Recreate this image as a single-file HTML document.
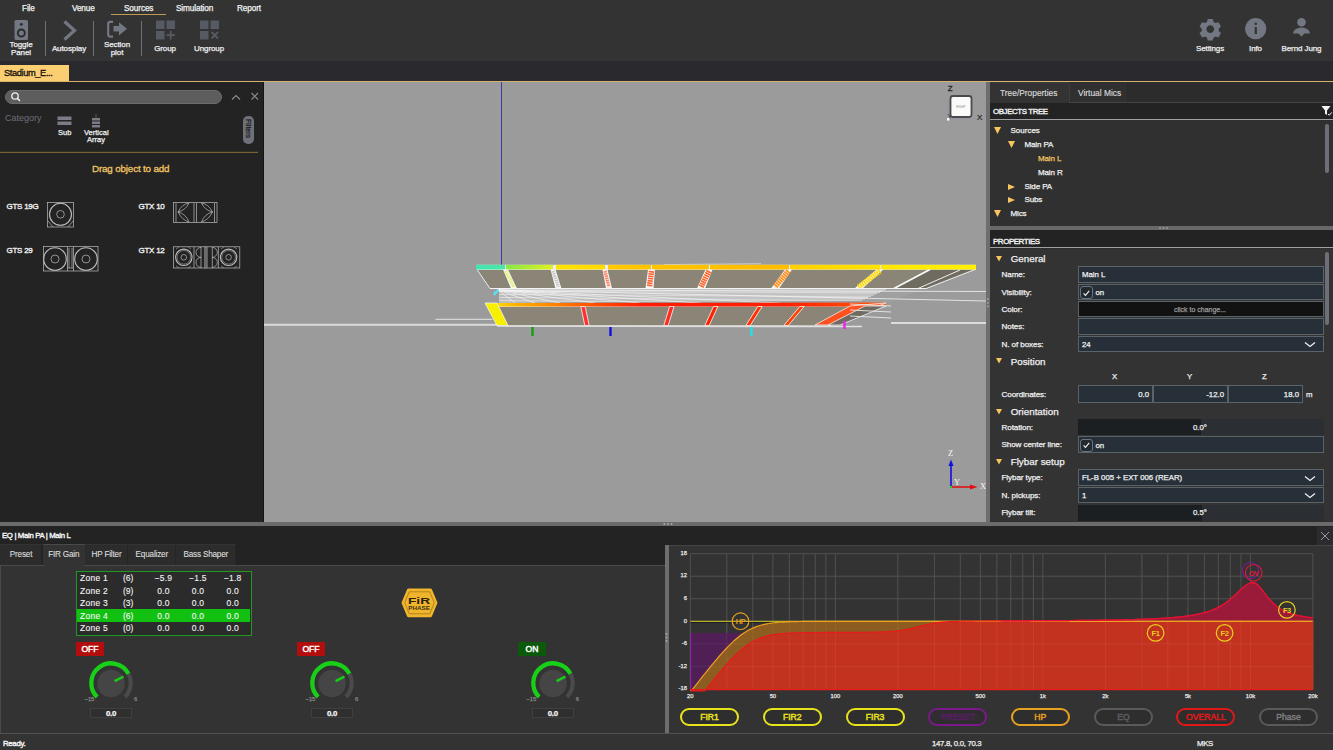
<!DOCTYPE html>
<html><head><meta charset="utf-8">
<style>
*{margin:0;padding:0;box-sizing:border-box}
html,body{width:1333px;height:750px;overflow:hidden;background:#2a2a2e;font-family:"Liberation Sans",sans-serif;color:#fff}
.a{position:absolute}
.t{position:absolute;white-space:nowrap;line-height:1;-webkit-text-stroke-width:0.25px}
#top{left:0;top:0;width:1333px;height:61px;background:#333333}
.menu{font-size:8.2px;color:#f2f2f2;top:4.8px;letter-spacing:-0.1px}
.tb{font-size:8px;color:#f0f0f0;text-align:center;width:60px;letter-spacing:-0.1px}
.sep{position:absolute;width:1px;background:#6d7378;top:21px;height:35px}
#tabbar{left:0;top:61px;width:1333px;height:20px;background:#2a2a2e}
#left{left:0;top:82px;width:263px;height:440px;background:#232323}
#vp{left:264px;top:82px;width:722px;height:440px;background:#9b9b9b}
#right{left:990px;top:82px;width:343px;height:440px;background:#2e2e2e}
#hsplit{left:0;top:522px;width:1333px;height:4px;background:#6b6b6b}
#bottom{left:0;top:526px;width:1333px;height:209px;background:#232323}
#status{left:0;top:733px;width:1333px;height:17px;background:#333333;border-top:1.5px solid #525252;z-index:2}
</style></head><body>
<!-- TOP TOOLBAR -->
<div id="top" class="a">
  <div class="t menu" style="left:22px">File</div>
  <div class="t menu" style="left:72px">Venue</div>
  <div class="t menu" style="left:124px">Sources</div>
  <div class="t menu" style="left:176px">Simulation</div>
  <div class="t menu" style="left:237px">Report</div>
  <div class="a" style="left:111px;top:13.5px;width:55px;height:1.2px;background:#c09a50"></div>
  <svg class="a" style="left:0;top:0" width="300" height="61" viewBox="0 0 300 61">
    <g fill="#737782">
      <rect x="14.5" y="20" width="13.5" height="20" rx="1.5"/>
    </g>
    <circle cx="21.3" cy="24.3" r="1.4" fill="#2b2b2b"/>
    <circle cx="21.3" cy="33" r="3.5" fill="none" stroke="#2b2b2b" stroke-width="1.9"/>
    <polyline points="64.5,21.5 74.5,30.5 64.5,39.5" fill="none" stroke="#737782" stroke-width="3.2"/>
    <path d="M113,21.8 h-2.8 a2,2 0 0 0 -2,2 v10.8 a2,2 0 0 0 2,2 h2.8" fill="none" stroke="#737782" stroke-width="2.2"/>
    <path d="M113.5,26 h5.5 v-3.8 l8,6.6 l-8,6.6 v-3.8 h-5.5 z" fill="#737782"/>
    <g fill="#565a62">
      <rect x="156" y="20.5" width="8.5" height="8.5"/>
      <rect x="166.5" y="20.5" width="8.5" height="8.5"/>
      <rect x="156" y="31" width="8.5" height="8.5"/>
      <rect x="200" y="20.5" width="8.5" height="8.5"/>
      <rect x="210.5" y="20.5" width="8.5" height="8.5"/>
      <rect x="200" y="31" width="8.5" height="8.5"/>
    </g>
    <path d="M170.7,31 v8.5 M166.5,35.2 h8.5" stroke="#565a62" stroke-width="1.8"/>
    <path d="M211.5,32 l6.5,6.5 M218,32 l-6.5,6.5" stroke="#565a62" stroke-width="1.8"/>
  </svg>
  <div class="t tb" style="left:-9px;top:40.7px;line-height:8px">Toggle<br>Panel</div>
  <div class="t tb" style="left:39px;top:44.6px">Autosplay</div>
  <div class="t tb" style="left:87px;top:40.7px;line-height:8px">Section<br>plot</div>
  <div class="t tb" style="left:135px;top:44.6px">Group</div>
  <div class="t tb" style="left:179px;top:44.6px">Ungroup</div>
  <svg class="a" style="left:1190px;top:10px" width="143" height="40" viewBox="1190 10 143 40">
    <g fill="#737782">
      <g transform="translate(1210.25 29.1) scale(0.92) translate(-1210.25 -29)"><path d="M1207.5,18 h5.5 l0.8,3.2 l2.2,1.3 l3.2,-1 l2.7,4.8 l-2.4,2.2 v2.5 l2.4,2.2 l-2.7,4.8 l-3.2,-1 l-2.2,1.3 l-0.8,3.2 h-5.5 l-0.8,-3.2 l-2.2,-1.3 l-3.2,1 l-2.7,-4.8 l2.4,-2.2 v-2.5 l-2.4,-2.2 l2.7,-4.8 l3.2,1 l2.2,-1.3 z M1210.25,24.8 a4.2,4.2 0 1 0 0.01,0 z" fill-rule="evenodd"/></g>
      <circle cx="1255.7" cy="28.7" r="10.6"/>
      <circle cx="1301.5" cy="22.3" r="4.3"/>
      <path d="M1293,33.5 a8.5,6 0 0 1 17,0 z M1298.5,33.5 h6 l-3,3 z"/>
    </g>
    <rect x="1254.7" y="27" width="2.2" height="7" fill="#333"/>
    <circle cx="1255.8" cy="23.8" r="1.2" fill="#333"/>
  </svg>
  <div class="t tb" style="left:1180px;top:44.6px">Settings</div>
  <div class="t tb" style="left:1225.5px;top:44.6px">Info</div>
  <div class="t tb" style="left:1271.5px;top:44.6px">Bernd Jung</div>
  <div class="sep" style="left:45px"></div>
  <div class="sep" style="left:93px"></div>
  <div class="sep" style="left:141px"></div>
</div>
<div id="tabbar" class="a"></div>
<div class="a" style="left:0;top:65px;width:69px;height:17px;background:#fcce72"></div>
<div class="t" style="left:4px;top:68.5px;font-size:9.3px;color:#111;letter-spacing:-0.4px;-webkit-text-stroke-width:0.3px">Stadium_E...</div>
<div class="a" style="left:0;top:81px;width:1333px;height:1px;background:#d6b26a"></div>
<div id="left" class="a"></div>
<div class="a" style="left:5px;top:90px;width:217px;height:14px;border-radius:7px;background:#5d5d5d;border:1px solid #6c6c6c"></div>
<svg class="a" style="left:0;top:82px" width="263" height="200" viewBox="0 82 263 200">
  <circle cx="15" cy="96" r="3.2" fill="none" stroke="#f0f0f0" stroke-width="1.3"/>
  <path d="M17.3,98.3 l2.6,2.6" stroke="#f0f0f0" stroke-width="1.5"/>
  <polyline points="232,99.5 236,95.5 240,99.5" fill="none" stroke="#8a8a90" stroke-width="1.2"/>
  <path d="M251.5,93 l6.5,6.5 M258,93 l-6.5,6.5" stroke="#8a8a90" stroke-width="1.2"/>
  <g fill="#7a7c86">
    <rect x="57.5" y="116.5" width="14" height="3.5"/>
    <rect x="57.5" y="121.5" width="14" height="3.5"/>
    <rect x="92" y="118" width="8" height="2.5"/>
    <rect x="92" y="121.5" width="8" height="2.5"/>
    <rect x="92" y="125" width="8" height="2.5"/>
  </g>
  <path d="M96,114 v4" stroke="#7a7c86" stroke-width="0.6"/>
  <rect x="243" y="116" width="11" height="28" rx="5" fill="#6e717a"/>
  <rect x="0" y="151.8" width="258" height="1.2" fill="#7a6232"/>
</svg>
<div class="t" style="left:5px;top:114px;font-size:9px;color:#6e7078;-webkit-text-stroke-width:0">Category</div>
<div class="t" style="left:58px;top:129px;font-size:7.5px;color:#f0f0f0">Sub</div>
<div class="t" style="left:84px;top:129px;font-size:7.5px;color:#f0f0f0;text-align:center;width:24px;line-height:7px">Vertical<br>Array</div>
<div class="t" style="left:246px;top:119px;font-size:7px;color:#1e1e1e;transform:rotate(90deg);transform-origin:0 0;left:252px">Filters</div>
<div class="t" style="left:92px;top:164.3px;font-size:9.8px;color:#f1c563;letter-spacing:-0.15px;-webkit-text-stroke-width:0.3px">Drag object to add</div>
<div class="t" style="left:6.5px;top:203px;font-size:8px;color:#f4f4f4;letter-spacing:-0.25px;-webkit-text-stroke-width:0.32px">GTS 19G</div>
<div class="t" style="left:6.5px;top:247px;font-size:8px;color:#f4f4f4;letter-spacing:-0.25px;-webkit-text-stroke-width:0.32px">GTS 29</div>
<div class="t" style="left:138.5px;top:203px;font-size:8px;color:#f4f4f4;letter-spacing:-0.25px;-webkit-text-stroke-width:0.32px">GTX 10</div>
<div class="t" style="left:138.5px;top:247px;font-size:8px;color:#f4f4f4;letter-spacing:-0.25px;-webkit-text-stroke-width:0.32px">GTX 12</div>
<svg class="a" style="left:0;top:190px" width="263" height="90" viewBox="0 190 263 90" fill="none" stroke="#bdbdbd" stroke-width="0.7">
  <rect x="47.5" y="202.5" width="26" height="24.5"/>
  <circle cx="60.5" cy="214.3" r="11" stroke-width="1.1"/>
  <circle cx="60.5" cy="214.3" r="3.8"/>
  <path d="M48,221 l5,6 M73,221 l-5,6"/>
  <rect x="43.5" y="246.5" width="54.5" height="24.5"/>
  <circle cx="55" cy="259" r="11.3" stroke-width="1.1"/>
  <circle cx="55" cy="259" r="4"/>
  <circle cx="86" cy="259" r="11.3" stroke-width="1.1"/>
  <circle cx="86" cy="259" r="4"/>
  <path d="M67.5,247 v24 M73.5,247 v24 M69,248 v20 M72,248 v20 M67.5,268 h6"/>
  <rect x="173.5" y="202.5" width="43.5" height="20"/>
  <path d="M176,203 v19 M214.5,203 v19 M194,203 v19 M196.5,203 v19"/>
  <path d="M178,212 q4,-8 11,-9 M178,212 q4,8 11,10 M178,212 q8,-2 11,-9 M178,212 q8,2 11,10"/>
  <path d="M212.5,212 q-4,-8 -11,-9 M212.5,212 q-4,8 -11,10 M212.5,212 q-8,-2 -11,-9 M212.5,212 q-8,2 -11,10"/>
  <rect x="173.5" y="246.8" width="66.3" height="21.2"/>
  <path d="M194,247 v21 M218.4,247 v21 M201,247 v21 M212.3,247 v21"/>
  <rect x="204.6" y="247" width="2.6" height="21" fill="#6a6a6a" stroke="#9a9a9a" stroke-width="0.5"/>
  <circle cx="183.8" cy="257.3" r="8.2" stroke-width="1.1"/>
  <circle cx="183.8" cy="257.3" r="6.8" stroke-width="0.5"/>
  <circle cx="183.8" cy="257.3" r="2.8"/>
  <circle cx="228.6" cy="257.3" r="8.2" stroke-width="1.1"/>
  <circle cx="228.6" cy="257.3" r="6.8" stroke-width="0.5"/>
  <circle cx="228.6" cy="257.3" r="2.8"/>
  <path d="M201,247.4 a5,5 0 0 0 0,10 a5,5 0 0 0 0,10 M212.3,247.4 a5,5 0 0 1 0,10 a5,5 0 0 1 0,10"/>
  <path d="M176,249 l3,-2 M176,266 l3,2 M191,249 l-3,-2 M191,266 l-3,2 M221,249 l3,-2 M221,266 l3,2 M237,249 l-3,-2 M237,266 l-3,2" stroke-width="0.5"/>
</svg>
<div class="a" style="left:263px;top:82px;width:1px;height:440px;background:#151515"></div>
<div id="vp" class="a"></div>
<!--VP--><svg class="a" style="left:264px;top:82px" width="722" height="440" viewBox="264 82 722 440">
<defs>
<linearGradient id="ug" x1="477" x2="976" y1="0" y2="0" gradientUnits="userSpaceOnUse"><stop offset="0" stop-color="#3ee8b0"/><stop offset="0.06" stop-color="#7ee860"/><stop offset="0.16" stop-color="#e8f020"/><stop offset="0.26" stop-color="#ffe400"/><stop offset="0.42" stop-color="#ffc800"/><stop offset="0.62" stop-color="#ffc400"/><stop offset="0.78" stop-color="#ffe800"/><stop offset="1" stop-color="#fff200"/></linearGradient>
<linearGradient id="lg" x1="485" x2="886" y1="0" y2="0" gradientUnits="userSpaceOnUse"><stop offset="0" stop-color="#ffee00"/><stop offset="0.08" stop-color="#ffb000"/><stop offset="0.25" stop-color="#ff5a00"/><stop offset="0.4" stop-color="#ff1a00"/><stop offset="0.75" stop-color="#ff2000"/><stop offset="1" stop-color="#ff5a10"/></linearGradient>
</defs>
<line x1="501.5" y1="82" x2="501.5" y2="325" stroke="#3a3aa8" stroke-width="1"/>
<rect x="264" y="323.8" width="233" height="2" fill="#d9d9d9"/>
<rect x="435.5" y="318.8" width="57" height="1" fill="#e6e6e6"/>
<line x1="664" y1="264.6" x2="761" y2="263.6" stroke="#d0d0d0" stroke-width="0.8"/>
<polygon points="477,269.5 976,269 926,288.5 490,288.5" fill="#8a8576" stroke="#f2f2f2" stroke-width="0.9"/>
<polygon points="930,269 976,269 926,288.5 894,288.5" fill="#6f6b60" stroke="#f2f2f2" stroke-width="0.8"/>
<rect x="477" y="264.8" width="499" height="4.7" fill="#eeeeee"/>
<linearGradient id="sg0" x1="476" x2="505" y1="0" y2="0" gradientUnits="userSpaceOnUse"><stop offset="0" stop-color="#44e4b0"/><stop offset="1" stop-color="#48e8a8"/></linearGradient>
<rect x="476" y="264.8" width="29" height="4.7" fill="url(#sg0)"/>
<linearGradient id="sg1" x1="506" x2="553" y1="0" y2="0" gradientUnits="userSpaceOnUse"><stop offset="0" stop-color="#88e848"/><stop offset="1" stop-color="#e0f020"/></linearGradient>
<rect x="506" y="264.8" width="47" height="4.7" fill="url(#sg1)"/>
<linearGradient id="sg2" x1="556" x2="605" y1="0" y2="0" gradientUnits="userSpaceOnUse"><stop offset="0" stop-color="#fce400"/><stop offset="1" stop-color="#ffd800"/></linearGradient>
<rect x="556" y="264.8" width="49" height="4.7" fill="url(#sg2)"/>
<linearGradient id="sg3" x1="608" x2="651" y1="0" y2="0" gradientUnits="userSpaceOnUse"><stop offset="0" stop-color="#ffc800"/><stop offset="1" stop-color="#ffc400"/></linearGradient>
<rect x="608" y="264.8" width="43" height="4.7" fill="url(#sg3)"/>
<linearGradient id="sg4" x1="652" x2="709" y1="0" y2="0" gradientUnits="userSpaceOnUse"><stop offset="0" stop-color="#ffc400"/><stop offset="1" stop-color="#ffc000"/></linearGradient>
<rect x="652" y="264.8" width="57" height="4.7" fill="url(#sg4)"/>
<linearGradient id="sg5" x1="710" x2="789" y1="0" y2="0" gradientUnits="userSpaceOnUse"><stop offset="0" stop-color="#ffc000"/><stop offset="1" stop-color="#ffbe00"/></linearGradient>
<rect x="710" y="264.8" width="79" height="4.7" fill="url(#sg5)"/>
<linearGradient id="sg6" x1="790" x2="880" y1="0" y2="0" gradientUnits="userSpaceOnUse"><stop offset="0" stop-color="#ffd000"/><stop offset="1" stop-color="#ffe400"/></linearGradient>
<rect x="790" y="264.8" width="90" height="4.7" fill="url(#sg6)"/>
<linearGradient id="sg7" x1="881" x2="976" y1="0" y2="0" gradientUnits="userSpaceOnUse"><stop offset="0" stop-color="#ffe800"/><stop offset="1" stop-color="#fff000"/></linearGradient>
<rect x="881" y="264.8" width="95" height="4.7" fill="url(#sg7)"/>
<polygon points="503.0,269.5 508.0,269.5 517,288.5 511,288.5" fill="#f8f8f8"/>
<line x1="505.5" y1="271" x2="514" y2="287" stroke="#e0f070" stroke-width="3.4" stroke-dasharray="1.6 0.7"/>
<polygon points="550.5,269.5 555.5,269.5 561.5,288.5 555.5,288.5" fill="#f8f8f8"/>
<line x1="553" y1="271" x2="558.5" y2="287" stroke="#c8c8c8" stroke-width="3.4" stroke-dasharray="1.6 0.7"/>
<polygon points="602.5,269.5 607.5,269.5 612,288.5 606,288.5" fill="#f8f8f8"/>
<line x1="605" y1="271" x2="609" y2="287" stroke="#ff8060" stroke-width="3.4" stroke-dasharray="1.6 0.7"/>
<polygon points="648.0,269.5 655.0,269.5 653.5,288.5 645.5,288.5" fill="#f8f8f8"/>
<line x1="651.5" y1="271" x2="649.5" y2="287" stroke="#ff6030" stroke-width="5.4" stroke-dasharray="1.6 0.7"/>
<polygon points="705.5,269.5 712.5,269.5 705,288.5 697,288.5" fill="#f8f8f8"/>
<line x1="709" y1="271" x2="701" y2="287" stroke="#ff6020" stroke-width="5.4" stroke-dasharray="1.6 0.7"/>
<polygon points="785.0,269.5 792.0,269.5 779,288.5 771,288.5" fill="#f8f8f8"/>
<line x1="788.5" y1="271" x2="775" y2="287" stroke="#ff8a10" stroke-width="5.4" stroke-dasharray="1.6 0.7"/>
<polygon points="876.5,269.5 883.5,269.5 862.5,288.5 854.5,288.5" fill="#f8f8f8"/>
<line x1="880" y1="271" x2="858.5" y2="287" stroke="#ffd800" stroke-width="5.4" stroke-dasharray="1.6 0.7"/>
<line x1="930" y1="269.5" x2="894" y2="288.5" stroke="#f8f8f8" stroke-width="1.5"/>
<line x1="960" y1="270" x2="918" y2="288.5" stroke="#f0f0f0" stroke-width="1"/>
<polygon points="498,288.5 926,288.5 886,303 500,303" fill="#a0a0a0"/>
<line x1="499" y1="290.00" x2="886" y2="289.80" stroke="#f4f4f4" stroke-width="0.7"/>
<line x1="499" y1="291.50" x2="883" y2="291.10" stroke="#f4f4f4" stroke-width="0.7"/>
<line x1="499" y1="293.00" x2="880" y2="292.40" stroke="#f4f4f4" stroke-width="0.7"/>
<line x1="499" y1="294.50" x2="877" y2="293.70" stroke="#f4f4f4" stroke-width="0.7"/>
<line x1="499" y1="296.00" x2="874" y2="295.00" stroke="#f4f4f4" stroke-width="0.7"/>
<line x1="499" y1="297.50" x2="871" y2="296.30" stroke="#f4f4f4" stroke-width="0.7"/>
<line x1="499" y1="299.00" x2="868" y2="297.60" stroke="#f4f4f4" stroke-width="0.7"/>
<line x1="499" y1="300.50" x2="865" y2="298.90" stroke="#f4f4f4" stroke-width="0.7"/>
<line x1="499" y1="302.00" x2="862" y2="300.20" stroke="#f4f4f4" stroke-width="0.7"/>
<line x1="498" y1="290" x2="515" y2="303" stroke="#f4f4f4" stroke-width="0.7"/>
<line x1="498" y1="290" x2="535" y2="303" stroke="#f4f4f4" stroke-width="0.7"/>
<line x1="498" y1="290" x2="560" y2="303" stroke="#f4f4f4" stroke-width="0.7"/>
<line x1="498" y1="290" x2="595" y2="303" stroke="#f4f4f4" stroke-width="0.7"/>
<line x1="498" y1="290" x2="640" y2="303" stroke="#f4f4f4" stroke-width="0.7"/>
<line x1="498" y1="290" x2="700" y2="303" stroke="#f4f4f4" stroke-width="0.7"/>
<line x1="498" y1="290" x2="780" y2="303" stroke="#f4f4f4" stroke-width="0.7"/>
<line x1="498" y1="290" x2="986" y2="291.5" stroke="#f4f4f4" stroke-width="0.8"/>
<line x1="498" y1="290" x2="986" y2="301" stroke="#f4f4f4" stroke-width="0.8"/>
<line x1="490" y1="288.5" x2="926" y2="288.5" stroke="#f4f4f4" stroke-width="1.2"/>
<polygon points="493,293 498,289 499,291 494.5,296" fill="#58e0f0"/>
<polygon points="497,306.5 886,306 828,326 506,326" fill="#8a8576" stroke="#f0f0f0" stroke-width="0.9"/>
<polygon points="485,303 886,302.5 886,306.5 497,306.5" fill="url(#lg)"/>
<polygon points="485,303 497,303 508,325.5 497,325.5" fill="#f6f000" stroke="#f4f4f4" stroke-width="0.8"/>
<polygon points="580.8,306.5 585.2,306.5 589.2,325.5 584.8,325.5" fill="#ff3030" stroke="#fafafa" stroke-width="0.8"/>
<polygon points="669.5999999999999,306.5 674.0,306.5 668.2,325.5 663.8,325.5" fill="#ff2a20" stroke="#fafafa" stroke-width="0.8"/>
<polygon points="713.5,306.5 717.9000000000001,306.5 709.2,325.5 704.8,325.5" fill="#ff2000" stroke="#fafafa" stroke-width="0.8"/>
<polygon points="757.8,306.5 762.2,306.5 750.2,325.5 745.8,325.5" fill="#ff3000" stroke="#fafafa" stroke-width="0.8"/>
<polygon points="799.8,306.5 804.2,306.5 788.2,325.5 783.8,325.5" fill="#ff4000" stroke="#fafafa" stroke-width="0.8"/>
<polygon points="850,306 886,303 830,325 815,325" fill="#ff5020" stroke="#f0f0f0" stroke-width="0.8"/>
<polygon points="865,306 886,306 840,325 828,325" fill="#6f6b60" stroke="#f0f0f0" stroke-width="0.8"/>
<line x1="497" y1="326" x2="862" y2="326.5" stroke="#e0e0e0" stroke-width="1.6"/>
<rect x="891" y="322" width="95" height="2" fill="#dcdcdc"/>
<line x1="850" y1="304" x2="891" y2="306" stroke="#eaeaea" stroke-width="0.9"/>
<line x1="850" y1="310" x2="891" y2="312" stroke="#eaeaea" stroke-width="0.9"/>
<line x1="850" y1="316" x2="891" y2="318" stroke="#eaeaea" stroke-width="0.9"/>
<rect x="531.3" y="327" width="2.4" height="9" fill="#10a010"/>
<rect x="609.3" y="327" width="2.4" height="9" fill="#1010e0"/>
<rect x="750.3" y="327" width="2.4" height="9" fill="#20e0e8"/>
<rect x="843.3" y="321" width="2.4" height="8" fill="#f020f0"/>
<text x="947.8" y="90.5" font-family="Liberation Sans" font-size="8" fill="#202020" stroke="#202020" stroke-width="0.3">Z</text>
<text x="977" y="119.5" font-family="Liberation Sans" font-size="8" fill="#202020" stroke="#202020" stroke-width="0.2">X</text>
<text x="947.5" y="119" font-family="Liberation Sans" font-size="7" fill="#202020">Y</text>
<rect x="950.5" y="96" width="21" height="21" rx="2.5" fill="#fafafa" stroke="#4a4a4a" stroke-width="1.8"/>
<text x="961" y="108" font-family="Liberation Sans" font-size="3" fill="#888" text-anchor="middle">RIGHT</text>
<rect x="947" y="118" width="2.5" height="2.5" fill="#fff"/>
<line x1="948" y1="99" x2="948" y2="118" stroke="#8090b0" stroke-width="0.4"/>
<line x1="949" y1="119" x2="969" y2="119" stroke="#8090b0" stroke-width="0.4"/>
<line x1="951" y1="487" x2="951" y2="463" stroke="#1010e0" stroke-width="1.6"/>
<polygon points="948.5,466 951,459.5 953.5,466" fill="#1010e0"/>
<line x1="951" y1="487" x2="973" y2="487" stroke="#e01010" stroke-width="1.6"/>
<polygon points="970,484.5 977.5,487 970,489.5" fill="#e01010"/>
<rect x="950" y="486" width="2" height="2" fill="#20d020"/>
<text x="948" y="456" font-family="Liberation Serif" font-size="8.5" fill="#f6f6f6">Z</text>
<text x="954" y="485" font-family="Liberation Serif" font-size="8.5" fill="#f6f6f6">Y</text>
<text x="980" y="489" font-family="Liberation Serif" font-size="8.5" fill="#f6f6f6">X</text>
</svg><!--/VP-->
<div class="a" style="left:986px;top:82px;width:4px;height:440px;background:#6e6e6e"></div>
<svg class="a" style="left:986px;top:296px" width="4" height="12"><circle cx="1.8" cy="3" r="0.9" fill="#a8a8a8"/><circle cx="1.8" cy="6.8" r="0.9" fill="#a8a8a8"/><circle cx="1.8" cy="10.3" r="0.9" fill="#a8a8a8"/></svg>
<div id="right" class="a"></div>
<div class="a" style="left:990px;top:82px;width:353px;height:21px;background:#2c2c2c;"></div>
<div class="a" style="left:990px;top:82px;width:79px;height:21px;background:#333333;border-top:1px solid #3c3c3c"></div>
<div class="a" style="left:1069px;top:83px;width:59px;height:19px;background:#303030;border-left:1px solid #3e3e3e;border-right:1px solid #2a2a2a"></div>
<div class="a" style="left:1069px;top:101.5px;width:264px;height:1px;background:#444"></div>
<div class="t" style="left:1000px;top:89px;font-size:8.4px;color:#dadada;-webkit-text-stroke-width:0.15px">Tree/Properties</div>
<div class="t" style="left:1078px;top:89px;font-size:8.4px;color:#dadada;-webkit-text-stroke-width:0.15px">Virtual Mics</div>
<div class="a" style="left:990px;top:103px;width:343px;height:17px;background:#232323;"></div>
<div class="a" style="left:990px;top:119px;width:343px;height:1.2px;background:#a0a0a0;"></div>
<svg class="a" style="left:1320px;top:104px" width="13" height="13" viewBox="0 0 13 13"><path d="M1.5,2 h9 l-3.5,4.5 v4.5 l-2,-1.2 v-3.3 z" fill="#f4f4f4"/><polyline points="8,10 9.3,11.2 11.8,8.4" fill="none" stroke="#f4f4f4" stroke-width="1"/></svg>
<div class="t" style="left:993px;top:108px;font-size:7.9px;color:#f4f4f4;letter-spacing:-0.4px;-webkit-text-stroke-width:0.35px">OBJECTS TREE</div>
<div class="a" style="left:990px;top:120.5px;width:343px;height:105.5px;background:#303030;"></div>
<div class="a" style="left:1325px;top:124px;width:4px;height:49px;background:#6c6f78;border-radius:2px"></div>
<svg class="a" style="left:994px;top:127px" width="8" height="8"><polygon points="0,0 7,0 3.5,7" fill="#f7c55e"/></svg>
<div class="t" style="left:1010.5px;top:127px;font-size:8px;color:#f0f0f0;">Sources</div>
<svg class="a" style="left:1008px;top:141px" width="8" height="8"><polygon points="0,0 7,0 3.5,7" fill="#f7c55e"/></svg>
<div class="t" style="left:1024.5px;top:141px;font-size:8px;letter-spacing:-0.12px;color:#f0f0f0;">Main PA</div>
<div class="t" style="left:1038px;top:155px;font-size:8px;letter-spacing:-0.12px;color:#f2c560;">Main L</div>
<div class="t" style="left:1038px;top:169px;font-size:8px;letter-spacing:-0.12px;color:#f0f0f0;">Main R</div>
<svg class="a" style="left:1008px;top:184px" width="8" height="8"><polygon points="0,0 7,3 0,6" fill="#f7c55e"/></svg>
<div class="t" style="left:1024.5px;top:183px;font-size:8px;letter-spacing:-0.12px;color:#f0f0f0;">Side PA</div>
<svg class="a" style="left:1008px;top:197px" width="8" height="8"><polygon points="0,0 7,3 0,6" fill="#f7c55e"/></svg>
<div class="t" style="left:1024.5px;top:195.7px;font-size:8px;letter-spacing:-0.12px;color:#f0f0f0;">Subs</div>
<svg class="a" style="left:994px;top:209.5px" width="8" height="8"><polygon points="0,0 7,0 3.5,7" fill="#f7c55e"/></svg>
<div class="t" style="left:1010.5px;top:209.6px;font-size:8px;letter-spacing:-0.12px;color:#f0f0f0;">Mics</div>
<div class="a" style="left:990px;top:226px;width:343px;height:4px;background:#686868;"></div>
<svg class="a" style="left:1158px;top:226px" width="12" height="4"><circle cx="2" cy="2" r="1" fill="#9a9a9a"/><circle cx="5.5" cy="2" r="1" fill="#9a9a9a"/><circle cx="9" cy="2" r="1" fill="#9a9a9a"/></svg>
<div class="a" style="left:990px;top:230px;width:343px;height:17px;background:#232323;"></div>
<div class="a" style="left:990px;top:247px;width:343px;height:1.2px;background:#a0a0a0;"></div>
<div class="t" style="left:993px;top:237.5px;font-size:7.9px;color:#f4f4f4;letter-spacing:-0.4px;-webkit-text-stroke-width:0.35px">PROPERTIES</div>
<div class="a" style="left:990px;top:248.5px;width:343px;height:272.5px;background:#333333;"></div>
<div class="a" style="left:1325px;top:252px;width:4px;height:73px;background:#6c6f78;border-radius:2px"></div>
<svg class="a" style="left:996px;top:255.5px" width="7" height="6"><polygon points="0,0 6,0 3,5.5" fill="#f7c55e"/></svg>
<div class="t" style="left:1010.7px;top:254.0px;font-size:9.8px;color:#f0f0f0;">General</div>
<div class="a" style="left:1078px;top:266px;width:246px;height:16.5px;background:#273038;border:1.3px solid #5a6368"></div>
<div class="t" style="left:1001.5px;top:271px;font-size:8.1px;color:#f0f0f0;letter-spacing:-0.1px">Name:</div>
<div class="t" style="left:1082px;top:271px;font-size:7.8px;color:#f0f0f0;">Main L</div>
<div class="a" style="left:1078px;top:283.5px;width:246px;height:16.5px;background:#273038;border:1.3px solid #5a6368"></div>
<div class="t" style="left:1001.5px;top:288.5px;font-size:8.1px;color:#f0f0f0;letter-spacing:-0.1px">Visibility:</div>
<div class="a" style="left:1080.3px;top:286px;width:12.5px;height:12.5px;border:1px solid #6a7480;border-radius:3px;background:#222a30"></div>
<svg class="a" style="left:1080px;top:286.5px" width="12.5" height="12.5"><polyline points="3.6,6.3 5.5,8.4 9.2,3.9" fill="none" stroke="#f4f4f4" stroke-width="1.1"/></svg>
<div class="t" style="left:1095.5px;top:289px;font-size:7.8px;color:#f0f0f0;">on</div>
<div class="a" style="left:1078px;top:300.5px;width:246px;height:16.5px;background:#121212;border:1.3px solid #5a6368"></div>
<div class="t" style="left:1001.5px;top:305.5px;font-size:8.1px;color:#f0f0f0;letter-spacing:-0.1px">Color:</div>
<div class="t" style="left:1145px;top:305.5px;font-size:7px;color:#9a9a9a;width:110px;text-align:center">click to change...</div>
<div class="a" style="left:1078px;top:318px;width:246px;height:16.5px;background:#273038;border:1.3px solid #5a6368"></div>
<div class="t" style="left:1001.5px;top:323px;font-size:8.1px;color:#f0f0f0;letter-spacing:-0.1px">Notes:</div>
<div class="a" style="left:1078px;top:335.5px;width:246px;height:16.5px;background:#273038;border:1.3px solid #5a6368"></div>
<div class="t" style="left:1001.5px;top:340.5px;font-size:8.1px;color:#f0f0f0;letter-spacing:-0.1px">N. of boxes:</div>
<div class="t" style="left:1082px;top:340.5px;font-size:7.8px;color:#f0f0f0;">24</div>
<svg class="a" style="left:1304px;top:341px" width="12" height="8"><polyline points="1,1.5 6,5.5 11,1.5" fill="none" stroke="#f0f0f0" stroke-width="1.3"/></svg>
<svg class="a" style="left:996px;top:358px" width="7" height="6"><polygon points="0,0 6,0 3,5.5" fill="#f7c55e"/></svg>
<div class="t" style="left:1010.7px;top:356.5px;font-size:9.8px;color:#f0f0f0;">Position</div>
<div class="t" style="left:1112px;top:373px;font-size:7.8px;color:#f0f0f0;">X</div>
<div class="t" style="left:1187px;top:373px;font-size:7.8px;color:#f0f0f0;">Y</div>
<div class="t" style="left:1262px;top:373px;font-size:7.8px;color:#f0f0f0;">Z</div>
<div class="t" style="left:1001.5px;top:390.5px;font-size:8.1px;color:#f0f0f0;letter-spacing:-0.1px">Coordinates:</div>
<div class="a" style="left:1078px;top:385px;width:75px;height:18px;background:#273038;border:1.3px solid #5a6368"></div>
<div class="a" style="left:1153px;top:385px;width:75px;height:18px;background:#273038;border:1.3px solid #5a6368"></div>
<div class="a" style="left:1228px;top:385px;width:75px;height:18px;background:#273038;border:1.3px solid #5a6368"></div>
<div class="t" style="left:1078px;top:391px;font-size:7.8px;color:#f0f0f0;width:71px;text-align:right">0.0</div>
<div class="t" style="left:1153px;top:391px;font-size:7.8px;color:#f0f0f0;width:71px;text-align:right">-12.0</div>
<div class="t" style="left:1228px;top:391px;font-size:7.8px;color:#f0f0f0;width:71px;text-align:right">18.0</div>
<div class="t" style="left:1306px;top:391px;font-size:7.8px;color:#f0f0f0;">m</div>
<svg class="a" style="left:996px;top:408.5px" width="7" height="6"><polygon points="0,0 6,0 3,5.5" fill="#f7c55e"/></svg>
<div class="t" style="left:1010.7px;top:407.0px;font-size:9.8px;color:#f0f0f0;">Orientation</div>
<div class="a" style="left:1078px;top:419px;width:246px;height:16px;background:#2b2f33;"></div>
<div class="a" style="left:1078px;top:419px;width:123px;height:16px;background:#1c1f22;"></div>
<div class="t" style="left:1001.5px;top:424px;font-size:8.1px;color:#f0f0f0;letter-spacing:-0.1px">Rotation:</div>
<div class="t" style="left:1150px;top:424px;font-size:7.8px;color:#f0f0f0;width:100px;text-align:center">0.0°</div>
<div class="a" style="left:1078px;top:436px;width:246px;height:16.5px;background:#273038;border:1.3px solid #5a6368"></div>
<div class="t" style="left:1001.5px;top:441px;font-size:8.1px;color:#f0f0f0;letter-spacing:-0.1px">Show center line:</div>
<div class="a" style="left:1080px;top:439px;width:12.5px;height:12.5px;border:1px solid #6a7480;border-radius:3px;background:#222a30"></div>
<svg class="a" style="left:1080px;top:439px" width="12.5" height="12.5"><polyline points="3.6,6.3 5.5,8.4 9.2,3.9" fill="none" stroke="#f4f4f4" stroke-width="1.1"/></svg>
<div class="t" style="left:1095.5px;top:441.5px;font-size:7.8px;color:#f0f0f0;">on</div>
<svg class="a" style="left:996px;top:458.5px" width="7" height="6"><polygon points="0,0 6,0 3,5.5" fill="#f7c55e"/></svg>
<div class="t" style="left:1010.7px;top:457.0px;font-size:9.8px;color:#f0f0f0;">Flybar setup</div>
<div class="a" style="left:1078px;top:469.3px;width:246px;height:16.5px;background:#273038;border:1.3px solid #5a6368"></div>
<div class="t" style="left:1001.5px;top:474px;font-size:8.1px;color:#f0f0f0;letter-spacing:-0.1px">Flybar type:</div>
<div class="t" style="left:1082px;top:474px;font-size:7.8px;color:#f0f0f0;">FL-B 005 + EXT 006 (REAR)</div>
<svg class="a" style="left:1304px;top:474.5px" width="12" height="8"><polyline points="1,1.5 6,5.5 11,1.5" fill="none" stroke="#f0f0f0" stroke-width="1.3"/></svg>
<div class="a" style="left:1078px;top:486.7px;width:246px;height:16.5px;background:#273038;border:1.3px solid #5a6368"></div>
<div class="t" style="left:1001.5px;top:491.5px;font-size:8.1px;color:#f0f0f0;letter-spacing:-0.1px">N. pickups:</div>
<div class="t" style="left:1082px;top:491.5px;font-size:7.8px;color:#f0f0f0;">1</div>
<svg class="a" style="left:1304px;top:492px" width="12" height="8"><polyline points="1,1.5 6,5.5 11,1.5" fill="none" stroke="#f0f0f0" stroke-width="1.3"/></svg>
<div class="a" style="left:1078px;top:505px;width:246px;height:16px;background:#2b2f33;"></div>
<div class="a" style="left:1078px;top:505px;width:124px;height:16px;background:#1c1f22;"></div>
<div class="t" style="left:1001.5px;top:508.5px;font-size:8.1px;color:#f0f0f0;letter-spacing:-0.1px">Flybar tilt:</div>
<div class="t" style="left:1150px;top:508.5px;font-size:7.8px;color:#f0f0f0;width:100px;text-align:center">0.5°</div>
<div id="hsplit" class="a"></div>
<svg class="a" style="left:660px;top:522px" width="16" height="4"><circle cx="4.3" cy="2" r="1" fill="#a8a8a8"/><circle cx="8" cy="2" r="1" fill="#a8a8a8"/><circle cx="11.5" cy="2" r="1" fill="#a8a8a8"/></svg>
<div id="bottom" class="a"></div>
<div id="status" class="a"></div>
<!--BOT--><div class="t" style="left:2px;top:532px;font-size:7.8px;color:#f4f4f4;letter-spacing:-0.35px;z-index:3;-webkit-text-stroke-width:0.4px">EQ | Main PA | Main L</div>
<div class="a" style="left:1317px;top:527px;width:16px;height:18px;background:#2c2c30;"></div>
<svg class="a" style="left:1320px;top:531px" width="10" height="10"><path d="M1,1 L9,9 M9,1 L1,9" stroke="#9a9aa0" stroke-width="1"/></svg>
<div class="a" style="left:0px;top:544px;width:42px;height:21px;background:#2c2c2c;border-top:1px solid #333;border-right:1px solid #262626"></div>
<div class="t" style="left:0px;top:551px;font-size:8.2px;color:#e0e0e0;width:42px;text-align:center;letter-spacing:-0.2px;-webkit-text-stroke-width:0.05px">Preset</div>
<div class="a" style="left:43px;top:544px;width:41.5px;height:21px;background:#333333;border-top:1px solid #4a4a4a;"></div>
<div class="t" style="left:43px;top:551px;font-size:8.2px;color:#e0e0e0;width:41.5px;text-align:center;letter-spacing:-0.2px;-webkit-text-stroke-width:0.05px">FIR Gain</div>
<div class="a" style="left:85px;top:544px;width:43px;height:21px;background:#2c2c2c;border-top:1px solid #333;border-right:1px solid #262626"></div>
<div class="t" style="left:85px;top:551px;font-size:8.2px;color:#e0e0e0;width:43px;text-align:center;letter-spacing:-0.2px;-webkit-text-stroke-width:0.05px">HP Filter</div>
<div class="a" style="left:128px;top:544px;width:47.5px;height:21px;background:#2c2c2c;border-top:1px solid #333;border-right:1px solid #262626"></div>
<div class="t" style="left:128px;top:551px;font-size:8.2px;color:#e0e0e0;width:47.5px;text-align:center;letter-spacing:-0.2px;-webkit-text-stroke-width:0.05px">Equalizer</div>
<div class="a" style="left:175.5px;top:544px;width:60.5px;height:21px;background:#2c2c2c;border-top:1px solid #333;border-right:1px solid #262626"></div>
<div class="t" style="left:175.5px;top:551px;font-size:8.2px;color:#e0e0e0;width:60.5px;text-align:center;letter-spacing:-0.2px;-webkit-text-stroke-width:0.05px">Bass Shaper</div>
<div class="a" style="left:0px;top:564.5px;width:665px;height:169px;background:#333333;border-top:1px solid #4a4a4a;border-left:1px solid #4a4a4a"></div>
<div class="a" style="left:43.5px;top:564px;width:40.5px;height:2px;background:#333333;"></div>
<div class="a" style="left:664.5px;top:544.5px;width:4.5px;height:189px;background:#6e6e6e;"></div>
<svg class="a" style="left:664px;top:632px" width="5" height="12"><circle cx="2.5" cy="2" r="0.9" fill="#aaa"/><circle cx="2.5" cy="5.5" r="0.9" fill="#aaa"/><circle cx="2.5" cy="9" r="0.9" fill="#aaa"/></svg>
<div class="a" style="left:669px;top:544.5px;width:664px;height:189px;background:#333333;border-top:1px solid #444"></div>
<div class="a" style="left:76px;top:571px;width:175.5px;height:64.5px;background:#2b2b2b;border:1.3px solid #1f9a1f"></div>
<div class="a" style="left:77.3px;top:609.4px;width:172.9px;height:12.4px;background:#12c012;"></div>
<div class="t" style="left:80px;top:574.3px;font-size:8.5px;color:#f6f6f6;letter-spacing:0.25px;-webkit-text-stroke-width:0.1px">Zone 1</div>
<div class="t" style="left:123px;top:574.3px;font-size:8.5px;color:#f6f6f6;-webkit-text-stroke-width:0.1px">(6)</div>
<div class="t" style="left:147.5px;top:574.3px;font-size:8.5px;color:#f6f6f6;width:32px;text-align:center;-webkit-text-stroke-width:0.1px;letter-spacing:0.2px">&minus;5.9</div>
<div class="t" style="left:182px;top:574.3px;font-size:8.5px;color:#f6f6f6;width:32px;text-align:center;-webkit-text-stroke-width:0.1px;letter-spacing:0.2px">&minus;1.5</div>
<div class="t" style="left:216.7px;top:574.3px;font-size:8.5px;color:#f6f6f6;width:32px;text-align:center;-webkit-text-stroke-width:0.1px;letter-spacing:0.2px">&minus;1.8</div>
<div class="t" style="left:80px;top:586.8px;font-size:8.5px;color:#f6f6f6;letter-spacing:0.25px;-webkit-text-stroke-width:0.1px">Zone 2</div>
<div class="t" style="left:123px;top:586.8px;font-size:8.5px;color:#f6f6f6;-webkit-text-stroke-width:0.1px">(9)</div>
<div class="t" style="left:147.5px;top:586.8px;font-size:8.5px;color:#f6f6f6;width:32px;text-align:center;-webkit-text-stroke-width:0.1px;letter-spacing:0.2px">0.0</div>
<div class="t" style="left:182px;top:586.8px;font-size:8.5px;color:#f6f6f6;width:32px;text-align:center;-webkit-text-stroke-width:0.1px;letter-spacing:0.2px">0.0</div>
<div class="t" style="left:216.7px;top:586.8px;font-size:8.5px;color:#f6f6f6;width:32px;text-align:center;-webkit-text-stroke-width:0.1px;letter-spacing:0.2px">0.0</div>
<div class="t" style="left:80px;top:599.3px;font-size:8.5px;color:#f6f6f6;letter-spacing:0.25px;-webkit-text-stroke-width:0.1px">Zone 3</div>
<div class="t" style="left:123px;top:599.3px;font-size:8.5px;color:#f6f6f6;-webkit-text-stroke-width:0.1px">(3)</div>
<div class="t" style="left:147.5px;top:599.3px;font-size:8.5px;color:#f6f6f6;width:32px;text-align:center;-webkit-text-stroke-width:0.1px;letter-spacing:0.2px">0.0</div>
<div class="t" style="left:182px;top:599.3px;font-size:8.5px;color:#f6f6f6;width:32px;text-align:center;-webkit-text-stroke-width:0.1px;letter-spacing:0.2px">0.0</div>
<div class="t" style="left:216.7px;top:599.3px;font-size:8.5px;color:#f6f6f6;width:32px;text-align:center;-webkit-text-stroke-width:0.1px;letter-spacing:0.2px">0.0</div>
<div class="t" style="left:80px;top:611.8px;font-size:8.5px;color:#f6f6f6;letter-spacing:0.25px;-webkit-text-stroke-width:0.1px">Zone 4</div>
<div class="t" style="left:123px;top:611.8px;font-size:8.5px;color:#f6f6f6;-webkit-text-stroke-width:0.1px">(6)</div>
<div class="t" style="left:147.5px;top:611.8px;font-size:8.5px;color:#f6f6f6;width:32px;text-align:center;-webkit-text-stroke-width:0.1px;letter-spacing:0.2px">0.0</div>
<div class="t" style="left:182px;top:611.8px;font-size:8.5px;color:#f6f6f6;width:32px;text-align:center;-webkit-text-stroke-width:0.1px;letter-spacing:0.2px">0.0</div>
<div class="t" style="left:216.7px;top:611.8px;font-size:8.5px;color:#f6f6f6;width:32px;text-align:center;-webkit-text-stroke-width:0.1px;letter-spacing:0.2px">0.0</div>
<div class="t" style="left:80px;top:624.3px;font-size:8.5px;color:#f6f6f6;letter-spacing:0.25px;-webkit-text-stroke-width:0.1px">Zone 5</div>
<div class="t" style="left:123px;top:624.3px;font-size:8.5px;color:#f6f6f6;-webkit-text-stroke-width:0.1px">(0)</div>
<div class="t" style="left:147.5px;top:624.3px;font-size:8.5px;color:#f6f6f6;width:32px;text-align:center;-webkit-text-stroke-width:0.1px;letter-spacing:0.2px">0.0</div>
<div class="t" style="left:182px;top:624.3px;font-size:8.5px;color:#f6f6f6;width:32px;text-align:center;-webkit-text-stroke-width:0.1px;letter-spacing:0.2px">0.0</div>
<div class="t" style="left:216.7px;top:624.3px;font-size:8.5px;color:#f6f6f6;width:32px;text-align:center;-webkit-text-stroke-width:0.1px;letter-spacing:0.2px">0.0</div>
<div class="a" style="left:76px;top:642.2px;width:28px;height:14px;background:#b30d0d;"></div>
<div class="t" style="left:76px;top:644.6px;font-size:8.6px;color:#ffffff;width:28px;text-align:center;-webkit-text-stroke-width:0.45px">OFF</div>
<svg class="a" style="left:85.8px;top:658px" width="50" height="50" viewBox="85.8 658 50 50"><path d="M128.19,673.75 A19.7,19.7 0 0 1 124.73,696.93" fill="none" stroke="#4a4a4a" stroke-width="4.2"/><path d="M96.87,696.93 A19.7,19.7 0 1 1 128.19,673.75" fill="none" stroke="#18d018" stroke-width="4.3"/><circle cx="110.8" cy="683.5" r="13.8" fill="#454545"/><line x1="114.36" y1="681.18" x2="123.27" y2="676.64" stroke="#18cc18" stroke-width="2.6"/></svg>
<div class="t" style="left:84.5px;top:697.3px;font-size:5.8px;color:#858585;">&minus;15</div>
<div class="t" style="left:134.0px;top:697.3px;font-size:5.8px;color:#858585;">6</div>
<div class="a" style="left:90.19999999999999px;top:707.6px;width:41.6px;height:10.8px;background:#2f2f2f;border:1px solid #3f3f3f"></div>
<div class="t" style="left:90.19999999999999px;top:709.5px;font-size:7.8px;color:#f8f8f8;width:41.6px;text-align:center;font-weight:bold;letter-spacing:-0.3px">0.0</div>
<div class="a" style="left:297px;top:642.2px;width:28px;height:14px;background:#b30d0d;"></div>
<div class="t" style="left:297px;top:644.6px;font-size:8.6px;color:#ffffff;width:28px;text-align:center;-webkit-text-stroke-width:0.45px">OFF</div>
<svg class="a" style="left:306.8px;top:658px" width="50" height="50" viewBox="306.8 658 50 50"><path d="M349.19,673.75 A19.7,19.7 0 0 1 345.73,696.93" fill="none" stroke="#4a4a4a" stroke-width="4.2"/><path d="M317.87,696.93 A19.7,19.7 0 1 1 349.19,673.75" fill="none" stroke="#18d018" stroke-width="4.3"/><circle cx="331.8" cy="683.5" r="13.8" fill="#454545"/><line x1="335.36" y1="681.18" x2="344.27" y2="676.64" stroke="#18cc18" stroke-width="2.6"/></svg>
<div class="t" style="left:305.5px;top:697.3px;font-size:5.8px;color:#858585;">&minus;15</div>
<div class="t" style="left:355.0px;top:697.3px;font-size:5.8px;color:#858585;">6</div>
<div class="a" style="left:311.2px;top:707.6px;width:41.6px;height:10.8px;background:#2f2f2f;border:1px solid #3f3f3f"></div>
<div class="t" style="left:311.2px;top:709.5px;font-size:7.8px;color:#f8f8f8;width:41.6px;text-align:center;font-weight:bold;letter-spacing:-0.3px">0.0</div>
<div class="a" style="left:518px;top:642.2px;width:28px;height:14px;background:#0b5a0b;"></div>
<div class="t" style="left:518px;top:644.6px;font-size:8.6px;color:#ffffff;width:28px;text-align:center;-webkit-text-stroke-width:0.45px">ON</div>
<svg class="a" style="left:527.6px;top:658px" width="50" height="50" viewBox="527.6 658 50 50"><path d="M569.99,673.75 A19.7,19.7 0 0 1 566.53,696.93" fill="none" stroke="#4a4a4a" stroke-width="4.2"/><path d="M538.67,696.93 A19.7,19.7 0 1 1 569.99,673.75" fill="none" stroke="#18d018" stroke-width="4.3"/><circle cx="552.6" cy="683.5" r="13.8" fill="#454545"/><line x1="556.16" y1="681.18" x2="565.07" y2="676.64" stroke="#18cc18" stroke-width="2.6"/></svg>
<div class="t" style="left:526.3000000000001px;top:697.3px;font-size:5.8px;color:#858585;">&minus;15</div>
<div class="t" style="left:575.8000000000001px;top:697.3px;font-size:5.8px;color:#858585;">6</div>
<div class="a" style="left:532.0px;top:707.6px;width:41.6px;height:10.8px;background:#2f2f2f;border:1px solid #3f3f3f"></div>
<div class="t" style="left:532.0px;top:709.5px;font-size:7.8px;color:#f8f8f8;width:41.6px;text-align:center;font-weight:bold;letter-spacing:-0.3px">0.0</div>
<svg class="a" style="left:398px;top:585px" width="44" height="36" viewBox="398 585 44 36"><path d="M408.5,590 h22 l5.3,12.8 l-5.3,12.8 h-22 l-5.3,-12.8 z" fill="#f0b52c" stroke="#f0b52c" stroke-width="3.2" stroke-linejoin="round"/><path d="M409.3,591.8 h20.4 l4.6,11 l-4.6,11 h-20.4 l-4.6,-11 z" fill="none" stroke="#9a6e14" stroke-width="0.7" stroke-linejoin="round"/><text x="408" y="603.6" font-family="Liberation Sans" font-size="9.6" font-weight="bold" fill="#2a2210" textLength="22" lengthAdjust="spacingAndGlyphs">FiR</text><text x="408.3" y="610.3" font-family="Liberation Sans" font-size="5.6" font-weight="bold" fill="#3a3018" textLength="21.5" lengthAdjust="spacingAndGlyphs">PHASE</text></svg>
<svg class="a" style="left:669px;top:545px" width="664" height="188" viewBox="669 545 664 188">
<line x1="690.3" y1="553.70" x2="1312.9" y2="553.70" stroke="#555555" stroke-width="0.9"/>
<line x1="690.3" y1="576.23" x2="1312.9" y2="576.23" stroke="#555555" stroke-width="0.9"/>
<line x1="690.3" y1="598.77" x2="1312.9" y2="598.77" stroke="#555555" stroke-width="0.9"/>
<line x1="690.3" y1="621.30" x2="1312.9" y2="621.30" stroke="#555555" stroke-width="0.9"/>
<line x1="690.3" y1="643.83" x2="1312.9" y2="643.83" stroke="#555555" stroke-width="0.9"/>
<line x1="690.3" y1="666.37" x2="1312.9" y2="666.37" stroke="#555555" stroke-width="0.9"/>
<line x1="690.3" y1="688.90" x2="1312.9" y2="688.90" stroke="#555555" stroke-width="0.9"/>
<line x1="690.30" y1="554" x2="690.30" y2="689.6" stroke="#555555" stroke-width="0.9"/>
<line x1="726.84" y1="554" x2="726.84" y2="689.6" stroke="#555555" stroke-width="0.9"/>
<line x1="752.77" y1="554" x2="752.77" y2="689.6" stroke="#555555" stroke-width="0.9"/>
<line x1="772.89" y1="554" x2="772.89" y2="689.6" stroke="#555555" stroke-width="0.9"/>
<line x1="789.32" y1="554" x2="789.32" y2="689.6" stroke="#555555" stroke-width="0.9"/>
<line x1="803.21" y1="554" x2="803.21" y2="689.6" stroke="#555555" stroke-width="0.9"/>
<line x1="815.25" y1="554" x2="815.25" y2="689.6" stroke="#555555" stroke-width="0.9"/>
<line x1="825.86" y1="554" x2="825.86" y2="689.6" stroke="#555555" stroke-width="0.9"/>
<line x1="835.36" y1="554" x2="835.36" y2="689.6" stroke="#555555" stroke-width="0.9"/>
<line x1="897.83" y1="554" x2="897.83" y2="689.6" stroke="#555555" stroke-width="0.9"/>
<line x1="934.38" y1="554" x2="934.38" y2="689.6" stroke="#555555" stroke-width="0.9"/>
<line x1="960.31" y1="554" x2="960.31" y2="689.6" stroke="#555555" stroke-width="0.9"/>
<line x1="980.42" y1="554" x2="980.42" y2="689.6" stroke="#555555" stroke-width="0.9"/>
<line x1="996.85" y1="554" x2="996.85" y2="689.6" stroke="#555555" stroke-width="0.9"/>
<line x1="1010.75" y1="554" x2="1010.75" y2="689.6" stroke="#555555" stroke-width="0.9"/>
<line x1="1022.78" y1="554" x2="1022.78" y2="689.6" stroke="#555555" stroke-width="0.9"/>
<line x1="1033.40" y1="554" x2="1033.40" y2="689.6" stroke="#555555" stroke-width="0.9"/>
<line x1="1042.89" y1="554" x2="1042.89" y2="689.6" stroke="#555555" stroke-width="0.9"/>
<line x1="1105.37" y1="554" x2="1105.37" y2="689.6" stroke="#555555" stroke-width="0.9"/>
<line x1="1141.91" y1="554" x2="1141.91" y2="689.6" stroke="#555555" stroke-width="0.9"/>
<line x1="1167.84" y1="554" x2="1167.84" y2="689.6" stroke="#555555" stroke-width="0.9"/>
<line x1="1187.95" y1="554" x2="1187.95" y2="689.6" stroke="#555555" stroke-width="0.9"/>
<line x1="1204.39" y1="554" x2="1204.39" y2="689.6" stroke="#555555" stroke-width="0.9"/>
<line x1="1218.28" y1="554" x2="1218.28" y2="689.6" stroke="#555555" stroke-width="0.9"/>
<line x1="1230.31" y1="554" x2="1230.31" y2="689.6" stroke="#555555" stroke-width="0.9"/>
<line x1="1240.93" y1="554" x2="1240.93" y2="689.6" stroke="#555555" stroke-width="0.9"/>
<line x1="1250.43" y1="554" x2="1250.43" y2="689.6" stroke="#555555" stroke-width="0.9"/>
<line x1="1312.90" y1="554" x2="1312.90" y2="689.6" stroke="#555555" stroke-width="0.9"/>
<rect x="690.3" y="632.94" width="80" height="56.66" fill="#4f1f56"/>
<line x1="690.6999999999999" y1="632.94" x2="690.6999999999999" y2="689.6" stroke="#8a20a0" stroke-width="1"/>
<path d="M690.30,690.78 L692.08,689.87 L693.87,687.58 L695.65,685.29 L697.44,683.02 L699.22,680.75 L701.01,678.49 L702.79,676.24 L704.58,674.00 L706.36,671.77 L708.15,669.56 L709.93,667.36 L711.72,665.19 L713.50,663.03 L715.29,660.90 L717.07,658.79 L718.86,656.71 L720.64,654.67 L722.43,652.66 L724.21,650.70 L726.00,648.78 L727.78,646.91 L729.57,645.10 L731.35,643.34 L733.14,641.65 L734.92,640.03 L736.71,638.48 L738.49,637.00 L740.28,635.60 L742.06,634.29 L743.84,633.05 L745.63,631.90 L747.41,630.83 L749.20,629.84 L750.98,628.93 L752.77,628.10 L754.55,627.35 L756.34,626.66 L758.12,626.04 L759.91,625.49 L761.69,624.99 L763.48,624.54 L765.26,624.15 L767.05,623.80 L768.83,623.49 L770.62,623.21 L772.40,622.97 L774.19,622.76 L775.97,622.57 L777.76,622.41 L779.54,622.27 L781.33,622.14 L783.11,622.03 L784.90,621.94 L786.68,621.85 L788.47,621.78 L790.25,621.72 L792.03,621.66 L793.82,621.61 L795.60,621.57 L797.39,621.54 L799.17,621.51 L800.96,621.48 L802.74,621.46 L804.53,621.43 L806.31,621.42 L808.10,621.40 L809.88,621.39 L811.67,621.38 L813.45,621.37 L815.24,621.36 L817.02,621.35 L818.81,621.34 L820.59,621.34 L822.38,621.33 L824.16,621.33 L825.95,621.32 L827.73,621.32 L829.52,621.32 L831.30,621.32 L833.09,621.31 L834.87,621.31 L836.66,621.31 L838.44,621.31 L840.23,621.31 L842.01,621.31 L843.79,621.31 L845.58,621.31 L847.36,621.30 L849.15,621.30 L850.93,621.30 L852.72,621.30 L854.50,621.30 L856.29,621.30 L858.07,621.30 L859.86,621.30 L861.64,621.30 L863.43,621.30 L865.21,621.30 L867.00,621.30 L868.78,621.30 L870.57,621.30 L872.35,621.30 L874.14,621.30 L875.92,621.30 L877.71,621.30 L879.49,621.30 L881.28,621.30 L883.06,621.30 L884.85,621.30 L886.63,621.30 L888.42,621.30 L890.20,621.30 L891.98,621.30 L893.77,621.30 L895.55,621.30 L897.34,621.30 L899.12,621.30 L900.91,621.30 L902.69,621.30 L904.48,621.30 L906.26,621.30 L908.05,621.30 L909.83,621.30 L911.62,621.30 L913.40,621.30 L915.19,621.30 L916.97,621.30 L918.76,621.30 L920.54,621.30 L922.33,621.30 L924.11,621.30 L925.90,621.30 L927.68,621.30 L929.47,621.30 L931.25,621.30 L933.04,621.30 L934.82,621.30 L936.61,621.30 L938.39,621.30 L940.18,621.30 L941.96,621.30 L943.74,621.30 L945.53,621.30 L947.31,621.30 L949.10,621.30 L950.88,621.30 L952.67,621.30 L954.45,621.30 L956.24,621.30 L958.02,621.30 L959.81,621.30 L961.59,621.30 L963.38,621.30 L965.16,621.30 L966.95,621.30 L968.73,621.30 L970.52,621.30 L972.30,621.30 L974.09,621.30 L975.87,621.30 L977.66,621.30 L979.44,621.30 L981.23,621.30 L983.01,621.30 L984.80,621.30 L986.58,621.30 L988.37,621.30 L990.15,621.30 L991.93,621.30 L993.72,621.30 L995.50,621.30 L997.29,621.30 L999.07,621.30 L1000.86,621.30 L1002.64,621.30 L1004.43,621.30 L1006.21,621.30 L1008.00,621.30 L1009.78,621.30 L1011.57,621.30 L1013.35,621.30 L1015.14,621.30 L1016.92,621.30 L1018.71,621.30 L1020.49,621.30 L1022.28,621.30 L1024.06,621.30 L1025.85,621.30 L1027.63,621.30 L1029.42,621.30 L1031.20,621.30 L1032.99,621.30 L1034.77,621.30 L1036.56,621.30 L1038.34,621.30 L1040.13,621.30 L1041.91,621.30 L1043.69,621.30 L1045.48,621.30 L1047.26,621.30 L1049.05,621.30 L1050.83,621.30 L1052.62,621.30 L1054.40,621.30 L1056.19,621.30 L1057.97,621.30 L1059.76,621.30 L1061.54,621.30 L1063.33,621.30 L1065.11,621.30 L1066.90,621.30 L1068.68,621.30 L1070.47,621.30 L1072.25,621.30 L1074.04,621.30 L1075.82,621.30 L1077.61,621.30 L1079.39,621.30 L1081.18,621.30 L1082.96,621.30 L1084.75,621.30 L1086.53,621.30 L1088.32,621.30 L1090.10,621.30 L1091.89,621.30 L1093.67,621.30 L1095.45,621.30 L1097.24,621.30 L1099.02,621.30 L1100.81,621.30 L1102.59,621.30 L1104.38,621.30 L1106.16,621.30 L1107.95,621.30 L1109.73,621.30 L1111.52,621.30 L1113.30,621.30 L1115.09,621.30 L1116.87,621.30 L1118.66,621.30 L1120.44,621.30 L1122.23,621.30 L1124.01,621.30 L1125.80,621.30 L1127.58,621.30 L1129.37,621.30 L1131.15,621.30 L1132.94,621.30 L1134.72,621.30 L1136.51,621.30 L1138.29,621.30 L1140.08,621.30 L1141.86,621.30 L1143.64,621.30 L1145.43,621.30 L1147.21,621.30 L1149.00,621.30 L1150.78,621.30 L1152.57,621.30 L1154.35,621.30 L1156.14,621.30 L1157.92,621.30 L1159.71,621.30 L1161.49,621.30 L1163.28,621.30 L1165.06,621.30 L1166.85,621.30 L1168.63,621.30 L1170.42,621.30 L1172.20,621.30 L1173.99,621.30 L1175.77,621.30 L1177.56,621.30 L1179.34,621.30 L1181.13,621.30 L1182.91,621.30 L1184.70,621.30 L1186.48,621.30 L1188.27,621.30 L1190.05,621.30 L1191.84,621.30 L1193.62,621.30 L1195.40,621.30 L1197.19,621.30 L1198.97,621.30 L1200.76,621.30 L1202.54,621.30 L1204.33,621.30 L1206.11,621.30 L1207.90,621.30 L1209.68,621.30 L1211.47,621.30 L1213.25,621.30 L1215.04,621.30 L1216.82,621.30 L1218.61,621.30 L1220.39,621.30 L1222.18,621.30 L1223.96,621.30 L1225.75,621.30 L1227.53,621.30 L1229.32,621.30 L1231.10,621.30 L1232.89,621.30 L1234.67,621.30 L1236.46,621.30 L1238.24,621.30 L1240.03,621.30 L1241.81,621.30 L1243.59,621.30 L1245.38,621.30 L1247.16,621.30 L1248.95,621.30 L1250.73,621.30 L1252.52,621.30 L1254.30,621.30 L1256.09,621.30 L1257.87,621.30 L1259.66,621.30 L1261.44,621.30 L1263.23,621.30 L1265.01,621.30 L1266.80,621.30 L1268.58,621.30 L1270.37,621.30 L1272.15,621.30 L1273.94,621.30 L1275.72,621.30 L1277.51,621.30 L1279.29,621.30 L1281.08,621.30 L1282.86,621.30 L1284.65,621.30 L1286.43,621.30 L1288.22,621.30 L1290.00,621.30 L1291.79,621.30 L1293.57,621.30 L1295.35,621.30 L1297.14,621.30 L1298.92,621.30 L1300.71,621.30 L1302.49,621.30 L1304.28,621.30 L1306.06,621.30 L1307.85,621.30 L1309.63,621.30 L1311.42,621.30 L1312.90,621.30 L1312.9,689.6 L690.3,689.6 Z" fill="#8c5c20"/>
<path d="M690.30,690.78 L692.08,690.78 L693.87,690.78 L695.65,690.78 L697.44,690.78 L699.22,690.78 L701.01,690.78 L702.79,690.78 L704.58,690.78 L706.36,688.98 L708.15,686.73 L709.93,684.49 L711.72,682.27 L713.50,680.06 L715.29,677.87 L717.07,675.70 L718.86,673.55 L720.64,671.42 L722.43,669.32 L724.21,667.26 L726.00,665.22 L727.78,663.23 L729.57,661.28 L731.35,659.37 L733.14,657.52 L734.92,655.72 L736.71,653.99 L738.49,652.32 L740.28,650.71 L742.06,649.18 L743.84,647.73 L745.63,646.36 L747.41,645.06 L749.20,643.85 L750.98,642.72 L752.77,641.68 L754.55,640.71 L756.34,639.83 L758.12,639.02 L759.91,638.29 L761.69,637.62 L763.48,637.02 L765.26,636.48 L767.05,636.00 L768.83,635.57 L770.62,635.19 L772.40,634.85 L774.19,634.55 L775.97,634.28 L777.76,634.05 L779.54,633.85 L781.33,633.67 L783.11,633.51 L784.90,633.37 L786.68,633.25 L788.47,633.14 L790.25,633.05 L792.03,632.97 L793.82,632.90 L795.60,632.84 L797.39,632.79 L799.17,632.74 L800.96,632.70 L802.74,632.66 L804.53,632.63 L806.31,632.60 L808.10,632.58 L809.88,632.56 L811.67,632.54 L813.45,632.53 L815.24,632.51 L817.02,632.50 L818.81,632.49 L820.59,632.48 L822.38,632.47 L824.16,632.46 L825.95,632.45 L827.73,632.45 L829.52,632.44 L831.30,632.44 L833.09,632.43 L834.87,632.43 L836.66,632.42 L838.44,632.42 L840.23,632.41 L842.01,632.41 L843.79,632.40 L845.58,632.40 L847.36,632.39 L849.15,632.38 L850.93,632.38 L852.72,632.37 L854.50,632.36 L856.29,632.35 L858.07,632.34 L859.86,632.33 L861.64,632.32 L863.43,632.31 L865.21,632.29 L867.00,632.27 L868.78,632.25 L870.57,632.22 L872.35,632.19 L874.14,632.16 L875.92,632.12 L877.71,632.07 L879.49,632.02 L881.28,631.96 L883.06,631.89 L884.85,631.80 L886.63,631.71 L888.42,631.60 L890.20,631.48 L891.98,631.34 L893.77,631.18 L895.55,631.00 L897.34,630.80 L899.12,630.57 L900.91,630.32 L902.69,630.04 L904.48,629.73 L906.26,629.40 L908.05,629.04 L909.83,628.65 L911.62,628.25 L913.40,627.82 L915.19,627.39 L916.97,626.94 L918.76,626.49 L920.54,626.05 L922.33,625.61 L924.11,625.18 L925.90,624.78 L927.68,624.39 L929.47,624.03 L931.25,623.69 L933.04,623.38 L934.82,623.10 L936.61,622.84 L938.39,622.61 L940.18,622.41 L941.96,622.22 L943.74,622.06 L945.53,621.92 L947.31,621.79 L949.10,621.68 L950.88,621.59 L952.67,621.50 L954.45,621.43 L956.24,621.36 L958.02,621.31 L959.81,621.30 L961.59,621.30 L963.38,621.30 L965.16,621.30 L966.95,621.30 L968.73,621.30 L970.52,621.30 L972.30,621.30 L974.09,621.30 L975.87,621.30 L977.66,621.30 L979.44,621.30 L981.23,621.30 L983.01,621.30 L984.80,621.30 L986.58,621.30 L988.37,621.30 L990.15,621.30 L991.93,621.30 L993.72,621.30 L995.50,621.30 L997.29,621.30 L999.07,621.30 L1000.86,621.30 L1002.64,621.30 L1004.43,621.30 L1006.21,621.30 L1008.00,621.30 L1009.78,621.30 L1011.57,621.30 L1013.35,621.30 L1015.14,621.30 L1016.92,621.30 L1018.71,621.30 L1020.49,621.30 L1022.28,621.30 L1024.06,621.30 L1025.85,621.30 L1027.63,621.30 L1029.42,621.30 L1031.20,621.30 L1032.99,621.30 L1034.77,621.30 L1036.56,621.30 L1038.34,621.30 L1040.13,621.30 L1041.91,621.30 L1043.69,621.30 L1045.48,621.30 L1047.26,621.30 L1049.05,621.30 L1050.83,621.30 L1052.62,621.30 L1054.40,621.30 L1056.19,621.30 L1057.97,621.30 L1059.76,621.30 L1061.54,621.30 L1063.33,621.30 L1065.11,621.30 L1066.90,621.30 L1068.68,621.30 L1070.47,621.30 L1072.25,621.30 L1074.04,621.30 L1075.82,621.30 L1077.61,621.30 L1079.39,621.30 L1081.18,621.30 L1082.96,621.30 L1084.75,621.30 L1086.53,621.30 L1088.32,621.30 L1090.10,621.30 L1091.89,621.30 L1093.67,621.30 L1095.45,621.30 L1097.24,621.30 L1099.02,621.30 L1100.81,621.30 L1102.59,621.30 L1104.38,621.30 L1106.16,621.30 L1107.95,621.30 L1109.73,621.30 L1111.52,621.30 L1113.30,621.30 L1115.09,621.30 L1116.87,621.30 L1118.66,621.30 L1120.44,621.30 L1122.23,621.30 L1124.01,621.30 L1125.80,621.30 L1127.58,621.30 L1129.37,621.30 L1131.15,621.30 L1132.94,621.30 L1134.72,621.30 L1136.51,621.30 L1138.29,621.30 L1140.08,621.30 L1141.86,621.30 L1143.64,621.30 L1145.43,621.30 L1147.21,621.30 L1149.00,621.30 L1150.78,621.30 L1152.57,621.30 L1154.35,621.30 L1156.14,621.30 L1157.92,621.30 L1159.71,621.30 L1161.49,621.30 L1163.28,621.30 L1165.06,621.30 L1166.85,621.30 L1168.63,621.30 L1170.42,621.30 L1172.20,621.30 L1173.99,621.30 L1175.77,621.30 L1177.56,621.30 L1179.34,621.30 L1181.13,621.30 L1182.91,621.30 L1184.70,621.30 L1186.48,621.30 L1188.27,621.30 L1190.05,621.30 L1191.84,621.30 L1193.62,621.30 L1195.40,621.30 L1197.19,621.30 L1198.97,621.30 L1200.76,621.30 L1202.54,621.30 L1204.33,621.30 L1206.11,621.30 L1207.90,621.30 L1209.68,621.30 L1211.47,621.30 L1213.25,621.30 L1215.04,621.30 L1216.82,621.30 L1218.61,621.30 L1220.39,621.30 L1222.18,621.30 L1223.96,621.30 L1225.75,621.30 L1227.53,621.30 L1229.32,621.30 L1231.10,621.30 L1232.89,621.30 L1234.67,621.30 L1236.46,621.30 L1238.24,621.30 L1240.03,621.30 L1241.81,621.30 L1243.59,621.30 L1245.38,621.30 L1247.16,621.30 L1248.95,621.30 L1250.73,621.30 L1252.52,621.30 L1254.30,621.30 L1256.09,621.30 L1257.87,621.30 L1259.66,621.30 L1261.44,621.30 L1263.23,621.30 L1265.01,621.30 L1266.80,621.30 L1268.58,621.30 L1270.37,621.30 L1272.15,621.30 L1273.94,621.30 L1275.72,621.30 L1277.51,621.30 L1279.29,621.30 L1281.08,621.30 L1282.86,621.30 L1284.65,621.30 L1286.43,621.30 L1288.22,621.30 L1290.00,621.30 L1291.79,621.30 L1293.57,621.30 L1295.35,621.30 L1297.14,621.30 L1298.92,621.30 L1300.71,621.30 L1302.49,621.30 L1304.28,621.30 L1306.06,621.30 L1307.85,621.30 L1309.63,621.30 L1311.42,621.30 L1312.90,621.30 L1312.9,689.6 L690.3,689.6 Z" fill="#c3321f"/>
<path d="M1000.86,620.89 L1002.64,620.89 L1004.43,620.88 L1006.21,620.87 L1008.00,620.87 L1009.78,620.86 L1011.57,620.85 L1013.35,620.84 L1015.14,620.84 L1016.92,620.83 L1018.71,620.82 L1020.49,620.82 L1022.28,620.81 L1024.06,620.80 L1025.85,620.79 L1027.63,620.78 L1029.42,620.78 L1031.20,620.77 L1032.99,620.76 L1034.77,620.75 L1036.56,620.74 L1038.34,620.73 L1040.13,620.72 L1041.91,620.71 L1043.69,620.70 L1045.48,620.69 L1047.26,620.68 L1049.05,620.67 L1050.83,620.66 L1052.62,620.65 L1054.40,620.64 L1056.19,620.63 L1057.97,620.61 L1059.76,620.60 L1061.54,620.59 L1063.33,620.57 L1065.11,620.56 L1066.90,620.55 L1068.68,620.53 L1070.47,620.52 L1072.25,620.50 L1074.04,620.49 L1075.82,620.47 L1077.61,620.45 L1079.39,620.44 L1081.18,620.42 L1082.96,620.40 L1084.75,620.38 L1086.53,620.36 L1088.32,620.34 L1090.10,620.32 L1091.89,620.30 L1093.67,620.28 L1095.45,620.26 L1097.24,620.23 L1099.02,620.21 L1100.81,620.18 L1102.59,620.16 L1104.38,620.13 L1106.16,620.10 L1107.95,620.08 L1109.73,620.05 L1111.52,620.02 L1113.30,619.98 L1115.09,619.95 L1116.87,619.92 L1118.66,619.88 L1120.44,619.84 L1122.23,619.80 L1124.01,619.76 L1125.80,619.72 L1127.58,619.68 L1129.37,619.64 L1131.15,619.59 L1132.94,619.54 L1134.72,619.49 L1136.51,619.44 L1138.29,619.38 L1140.08,619.32 L1141.86,619.26 L1143.64,619.20 L1145.43,619.13 L1147.21,619.06 L1149.00,618.99 L1150.78,618.91 L1152.57,618.83 L1154.35,618.75 L1156.14,618.66 L1157.92,618.57 L1159.71,618.47 L1161.49,618.37 L1163.28,618.26 L1165.06,618.14 L1166.85,618.02 L1168.63,617.90 L1170.42,617.76 L1172.20,617.62 L1173.99,617.47 L1175.77,617.31 L1177.56,617.13 L1179.34,616.95 L1181.13,616.76 L1182.91,616.56 L1184.70,616.34 L1186.48,616.10 L1188.27,615.85 L1190.05,615.59 L1191.84,615.30 L1193.62,615.00 L1195.40,614.67 L1197.19,614.32 L1198.97,613.94 L1200.76,613.53 L1202.54,613.09 L1204.33,612.61 L1206.11,612.10 L1207.90,611.55 L1209.68,610.95 L1211.47,610.30 L1213.25,609.60 L1215.04,608.83 L1216.82,608.01 L1218.61,607.12 L1220.39,606.15 L1222.18,605.10 L1223.96,603.97 L1225.75,602.76 L1227.53,601.45 L1229.32,600.06 L1231.10,598.58 L1232.89,597.02 L1234.67,595.39 L1236.46,593.71 L1238.24,592.00 L1240.03,590.30 L1241.81,588.65 L1243.59,587.10 L1245.38,585.69 L1247.16,584.49 L1248.95,583.56 L1250.73,582.93 L1252.52,582.64 L1254.30,582.78 L1256.09,583.58 L1257.87,584.98 L1259.66,586.85 L1261.44,589.03 L1263.23,591.37 L1265.01,593.76 L1266.80,596.10 L1268.58,598.32 L1270.37,600.39 L1272.15,602.29 L1273.94,604.01 L1275.72,605.56 L1277.51,606.96 L1279.29,608.21 L1281.08,609.32 L1282.86,610.32 L1284.65,611.21 L1286.43,612.01 L1288.22,612.73 L1290.00,613.37 L1291.79,613.95 L1293.57,614.47 L1295.35,614.94 L1297.14,615.37 L1298.92,615.76 L1300.71,616.11 L1302.49,616.43 L1304.28,616.73 L1306.06,617.00 L1307.85,617.24 L1309.63,617.47 L1311.42,617.68 L1312.90,617.84 L1312.9,621.3 L1000.8590824602529,621.3 Z" fill="#9a1a3a"/>
<line x1="690.30" y1="621.3" x2="690.30" y2="689.6" stroke="#ffffff" stroke-opacity="0.08" stroke-width="0.9"/>
<line x1="726.84" y1="621.3" x2="726.84" y2="689.6" stroke="#ffffff" stroke-opacity="0.08" stroke-width="0.9"/>
<line x1="752.77" y1="621.3" x2="752.77" y2="689.6" stroke="#ffffff" stroke-opacity="0.08" stroke-width="0.9"/>
<line x1="772.89" y1="621.3" x2="772.89" y2="689.6" stroke="#ffffff" stroke-opacity="0.08" stroke-width="0.9"/>
<line x1="789.32" y1="621.3" x2="789.32" y2="689.6" stroke="#ffffff" stroke-opacity="0.08" stroke-width="0.9"/>
<line x1="803.21" y1="621.3" x2="803.21" y2="689.6" stroke="#ffffff" stroke-opacity="0.08" stroke-width="0.9"/>
<line x1="815.25" y1="621.3" x2="815.25" y2="689.6" stroke="#ffffff" stroke-opacity="0.08" stroke-width="0.9"/>
<line x1="825.86" y1="621.3" x2="825.86" y2="689.6" stroke="#ffffff" stroke-opacity="0.08" stroke-width="0.9"/>
<line x1="835.36" y1="621.3" x2="835.36" y2="689.6" stroke="#ffffff" stroke-opacity="0.08" stroke-width="0.9"/>
<line x1="897.83" y1="621.3" x2="897.83" y2="689.6" stroke="#ffffff" stroke-opacity="0.08" stroke-width="0.9"/>
<line x1="934.38" y1="621.3" x2="934.38" y2="689.6" stroke="#ffffff" stroke-opacity="0.08" stroke-width="0.9"/>
<line x1="960.31" y1="621.3" x2="960.31" y2="689.6" stroke="#ffffff" stroke-opacity="0.08" stroke-width="0.9"/>
<line x1="980.42" y1="621.3" x2="980.42" y2="689.6" stroke="#ffffff" stroke-opacity="0.08" stroke-width="0.9"/>
<line x1="996.85" y1="621.3" x2="996.85" y2="689.6" stroke="#ffffff" stroke-opacity="0.08" stroke-width="0.9"/>
<line x1="1010.75" y1="621.3" x2="1010.75" y2="689.6" stroke="#ffffff" stroke-opacity="0.08" stroke-width="0.9"/>
<line x1="1022.78" y1="621.3" x2="1022.78" y2="689.6" stroke="#ffffff" stroke-opacity="0.08" stroke-width="0.9"/>
<line x1="1033.40" y1="621.3" x2="1033.40" y2="689.6" stroke="#ffffff" stroke-opacity="0.08" stroke-width="0.9"/>
<line x1="1042.89" y1="621.3" x2="1042.89" y2="689.6" stroke="#ffffff" stroke-opacity="0.08" stroke-width="0.9"/>
<line x1="1105.37" y1="621.3" x2="1105.37" y2="689.6" stroke="#ffffff" stroke-opacity="0.08" stroke-width="0.9"/>
<line x1="1141.91" y1="621.3" x2="1141.91" y2="689.6" stroke="#ffffff" stroke-opacity="0.08" stroke-width="0.9"/>
<line x1="1167.84" y1="621.3" x2="1167.84" y2="689.6" stroke="#ffffff" stroke-opacity="0.08" stroke-width="0.9"/>
<line x1="1187.95" y1="621.3" x2="1187.95" y2="689.6" stroke="#ffffff" stroke-opacity="0.08" stroke-width="0.9"/>
<line x1="1204.39" y1="621.3" x2="1204.39" y2="689.6" stroke="#ffffff" stroke-opacity="0.08" stroke-width="0.9"/>
<line x1="1218.28" y1="621.3" x2="1218.28" y2="689.6" stroke="#ffffff" stroke-opacity="0.08" stroke-width="0.9"/>
<line x1="1230.31" y1="621.3" x2="1230.31" y2="689.6" stroke="#ffffff" stroke-opacity="0.08" stroke-width="0.9"/>
<line x1="1240.93" y1="621.3" x2="1240.93" y2="689.6" stroke="#ffffff" stroke-opacity="0.08" stroke-width="0.9"/>
<line x1="1250.43" y1="621.3" x2="1250.43" y2="689.6" stroke="#ffffff" stroke-opacity="0.08" stroke-width="0.9"/>
<line x1="1312.90" y1="621.3" x2="1312.90" y2="689.6" stroke="#ffffff" stroke-opacity="0.08" stroke-width="0.9"/>
<line x1="690.3" y1="643.83" x2="1312.9" y2="643.83" stroke="#ffffff" stroke-opacity="0.08" stroke-width="0.9"/>
<line x1="690.3" y1="666.37" x2="1312.9" y2="666.37" stroke="#ffffff" stroke-opacity="0.08" stroke-width="0.9"/>
<line x1="690.3" y1="622.10" x2="780" y2="622.10" stroke="#101020" stroke-width="1"/>
<line x1="690.3" y1="621.30" x2="1312.9" y2="621.30" stroke="#d8d020" stroke-width="1"/>
<path d="M690.30,690.78 L692.08,689.87 L693.87,687.58 L695.65,685.29 L697.44,683.02 L699.22,680.75 L701.01,678.49 L702.79,676.24 L704.58,674.00 L706.36,671.77 L708.15,669.56 L709.93,667.36 L711.72,665.19 L713.50,663.03 L715.29,660.90 L717.07,658.79 L718.86,656.71 L720.64,654.67 L722.43,652.66 L724.21,650.70 L726.00,648.78 L727.78,646.91 L729.57,645.10 L731.35,643.34 L733.14,641.65 L734.92,640.03 L736.71,638.48 L738.49,637.00 L740.28,635.60 L742.06,634.29 L743.84,633.05 L745.63,631.90 L747.41,630.83 L749.20,629.84 L750.98,628.93 L752.77,628.10 L754.55,627.35 L756.34,626.66 L758.12,626.04 L759.91,625.49 L761.69,624.99 L763.48,624.54 L765.26,624.15 L767.05,623.80 L768.83,623.49 L770.62,623.21 L772.40,622.97 L774.19,622.76 L775.97,622.57 L777.76,622.41 L779.54,622.27 L781.33,622.14 L783.11,622.03 L784.90,621.94 L786.68,621.85 L788.47,621.78 L790.25,621.72 L792.03,621.66 L793.82,621.61 L795.60,621.57 L797.39,621.54 L799.17,621.51 L800.96,621.48 L802.74,621.46 L804.53,621.43 L806.31,621.42 L808.10,621.40 L809.88,621.39 L811.67,621.38 L813.45,621.37 L815.24,621.36 L817.02,621.35 L818.81,621.34 L820.59,621.34 L822.38,621.33 L824.16,621.33 L825.95,621.32 L827.73,621.32 L829.52,621.32 L831.30,621.32 L833.09,621.31 L834.87,621.31 L836.66,621.31 L838.44,621.31 L840.23,621.31 L842.01,621.31 L843.79,621.31 L845.58,621.31 L847.36,621.30 L849.15,621.30 L850.93,621.30 L852.72,621.30 L854.50,621.30 L856.29,621.30 L858.07,621.30 L859.86,621.30 L861.64,621.30 L863.43,621.30 L865.21,621.30 L867.00,621.30 L868.78,621.30 L870.57,621.30 L872.35,621.30 L874.14,621.30 L875.92,621.30 L877.71,621.30 L879.49,621.30 L881.28,621.30 L883.06,621.30 L884.85,621.30 L886.63,621.30 L888.42,621.30 L890.20,621.30 L891.98,621.30 L893.77,621.30 L895.55,621.30 L897.34,621.30 L899.12,621.30 L900.91,621.30 L902.69,621.30 L904.48,621.30 L906.26,621.30 L908.05,621.30 L909.83,621.30 L911.62,621.30 L913.40,621.30 L915.19,621.30 L916.97,621.30 L918.76,621.30 L920.54,621.30 L922.33,621.30 L924.11,621.30 L925.90,621.30 L927.68,621.30 L929.47,621.30 L931.25,621.30 L933.04,621.30 L934.82,621.30 L936.61,621.30 L938.39,621.30 L940.18,621.30 L941.96,621.30 L943.74,621.30 L945.53,621.30 L947.31,621.30 L949.10,621.30 L950.88,621.30 L952.67,621.30 L954.45,621.30 L956.24,621.30 L958.02,621.30 L959.81,621.30 L961.59,621.30 L963.38,621.30 L965.16,621.30 L966.95,621.30 L968.73,621.30 L970.52,621.30 L972.30,621.30 L974.09,621.30 L975.87,621.30 L977.66,621.30 L979.44,621.30 L981.23,621.30 L983.01,621.30 L984.80,621.30 L986.58,621.30 L988.37,621.30 L990.15,621.30 L991.93,621.30 L993.72,621.30 L995.50,621.30 L997.29,621.30 L999.07,621.30 L1000.86,621.30 L1002.64,621.30 L1004.43,621.30 L1006.21,621.30 L1008.00,621.30 L1009.78,621.30 L1011.57,621.30 L1013.35,621.30 L1015.14,621.30 L1016.92,621.30 L1018.71,621.30 L1020.49,621.30 L1022.28,621.30 L1024.06,621.30 L1025.85,621.30 L1027.63,621.30 L1029.42,621.30 L1031.20,621.30 L1032.99,621.30 L1034.77,621.30 L1036.56,621.30 L1038.34,621.30 L1040.13,621.30 L1041.91,621.30 L1043.69,621.30 L1045.48,621.30 L1047.26,621.30 L1049.05,621.30 L1050.83,621.30 L1052.62,621.30 L1054.40,621.30 L1056.19,621.30 L1057.97,621.30 L1059.76,621.30 L1061.54,621.30 L1063.33,621.30 L1065.11,621.30 L1066.90,621.30 L1068.68,621.30 L1070.47,621.30 L1072.25,621.30 L1074.04,621.30 L1075.82,621.30 L1077.61,621.30 L1079.39,621.30 L1081.18,621.30 L1082.96,621.30 L1084.75,621.30 L1086.53,621.30 L1088.32,621.30 L1090.10,621.30 L1091.89,621.30 L1093.67,621.30 L1095.45,621.30 L1097.24,621.30 L1099.02,621.30 L1100.81,621.30 L1102.59,621.30 L1104.38,621.30 L1106.16,621.30 L1107.95,621.30 L1109.73,621.30 L1111.52,621.30 L1113.30,621.30 L1115.09,621.30 L1116.87,621.30 L1118.66,621.30 L1120.44,621.30 L1122.23,621.30 L1124.01,621.30 L1125.80,621.30 L1127.58,621.30 L1129.37,621.30 L1131.15,621.30 L1132.94,621.30 L1134.72,621.30 L1136.51,621.30 L1138.29,621.30 L1140.08,621.30 L1141.86,621.30 L1143.64,621.30 L1145.43,621.30 L1147.21,621.30 L1149.00,621.30 L1150.78,621.30 L1152.57,621.30 L1154.35,621.30 L1156.14,621.30 L1157.92,621.30 L1159.71,621.30 L1161.49,621.30 L1163.28,621.30 L1165.06,621.30 L1166.85,621.30 L1168.63,621.30 L1170.42,621.30 L1172.20,621.30 L1173.99,621.30 L1175.77,621.30 L1177.56,621.30 L1179.34,621.30 L1181.13,621.30 L1182.91,621.30 L1184.70,621.30 L1186.48,621.30 L1188.27,621.30 L1190.05,621.30 L1191.84,621.30 L1193.62,621.30 L1195.40,621.30 L1197.19,621.30 L1198.97,621.30 L1200.76,621.30 L1202.54,621.30 L1204.33,621.30 L1206.11,621.30 L1207.90,621.30 L1209.68,621.30 L1211.47,621.30 L1213.25,621.30 L1215.04,621.30 L1216.82,621.30 L1218.61,621.30 L1220.39,621.30 L1222.18,621.30 L1223.96,621.30 L1225.75,621.30 L1227.53,621.30 L1229.32,621.30 L1231.10,621.30 L1232.89,621.30 L1234.67,621.30 L1236.46,621.30 L1238.24,621.30 L1240.03,621.30 L1241.81,621.30 L1243.59,621.30 L1245.38,621.30 L1247.16,621.30 L1248.95,621.30 L1250.73,621.30 L1252.52,621.30 L1254.30,621.30 L1256.09,621.30 L1257.87,621.30 L1259.66,621.30 L1261.44,621.30 L1263.23,621.30 L1265.01,621.30 L1266.80,621.30 L1268.58,621.30 L1270.37,621.30 L1272.15,621.30 L1273.94,621.30 L1275.72,621.30 L1277.51,621.30 L1279.29,621.30 L1281.08,621.30 L1282.86,621.30 L1284.65,621.30 L1286.43,621.30 L1288.22,621.30 L1290.00,621.30 L1291.79,621.30 L1293.57,621.30 L1295.35,621.30 L1297.14,621.30 L1298.92,621.30 L1300.71,621.30 L1302.49,621.30 L1304.28,621.30 L1306.06,621.30 L1307.85,621.30 L1309.63,621.30 L1311.42,621.30 L1312.90,621.30" fill="none" stroke="#f0a020" stroke-width="1.2"/>
<path d="M690.30,690.78 L692.08,690.78 L693.87,690.78 L695.65,690.78 L697.44,690.78 L699.22,690.78 L701.01,690.78 L702.79,690.78 L704.58,690.78 L706.36,688.98 L708.15,686.73 L709.93,684.49 L711.72,682.27 L713.50,680.06 L715.29,677.87 L717.07,675.70 L718.86,673.55 L720.64,671.42 L722.43,669.32 L724.21,667.26 L726.00,665.22 L727.78,663.23 L729.57,661.28 L731.35,659.37 L733.14,657.52 L734.92,655.72 L736.71,653.99 L738.49,652.32 L740.28,650.71 L742.06,649.18 L743.84,647.73 L745.63,646.36 L747.41,645.06 L749.20,643.85 L750.98,642.72 L752.77,641.68 L754.55,640.71 L756.34,639.83 L758.12,639.02 L759.91,638.29 L761.69,637.62 L763.48,637.02 L765.26,636.48 L767.05,636.00 L768.83,635.57 L770.62,635.19 L772.40,634.85 L774.19,634.55 L775.97,634.28 L777.76,634.05 L779.54,633.85 L781.33,633.67 L783.11,633.51 L784.90,633.37 L786.68,633.25 L788.47,633.14 L790.25,633.05 L792.03,632.97 L793.82,632.90 L795.60,632.84 L797.39,632.79 L799.17,632.74 L800.96,632.70 L802.74,632.66 L804.53,632.63 L806.31,632.60 L808.10,632.58 L809.88,632.56 L811.67,632.54 L813.45,632.53 L815.24,632.51 L817.02,632.50 L818.81,632.49 L820.59,632.48 L822.38,632.47 L824.16,632.46 L825.95,632.45 L827.73,632.45 L829.52,632.44 L831.30,632.44 L833.09,632.43 L834.87,632.43 L836.66,632.42 L838.44,632.42 L840.23,632.41 L842.01,632.41 L843.79,632.40 L845.58,632.40 L847.36,632.39 L849.15,632.38 L850.93,632.38 L852.72,632.37 L854.50,632.36 L856.29,632.35 L858.07,632.34 L859.86,632.33 L861.64,632.32 L863.43,632.31 L865.21,632.29 L867.00,632.27 L868.78,632.25 L870.57,632.22 L872.35,632.19 L874.14,632.16 L875.92,632.12 L877.71,632.07 L879.49,632.02 L881.28,631.96 L883.06,631.89 L884.85,631.80 L886.63,631.71 L888.42,631.60 L890.20,631.48 L891.98,631.34 L893.77,631.18 L895.55,631.00 L897.34,630.80 L899.12,630.57 L900.91,630.32 L902.69,630.04 L904.48,629.73 L906.26,629.40 L908.05,629.04 L909.83,628.65 L911.62,628.25 L913.40,627.82 L915.19,627.39 L916.97,626.94 L918.76,626.49 L920.54,626.05 L922.33,625.61 L924.11,625.18 L925.90,624.78 L927.68,624.39 L929.47,624.03 L931.25,623.69 L933.04,623.38 L934.82,623.10 L936.61,622.84 L938.39,622.61 L940.18,622.41 L941.96,622.22 L943.74,622.06 L945.53,621.92 L947.31,621.79 L949.10,621.68 L950.88,621.59 L952.67,621.50 L954.45,621.43 L956.24,621.36 L958.02,621.31 L959.81,621.26 L961.59,621.22 L963.38,621.18 L965.16,621.15 L966.95,621.12 L968.73,621.10 L970.52,621.07 L972.30,621.05 L974.09,621.04 L975.87,621.02 L977.66,621.01 L979.44,621.00 L981.23,620.98 L983.01,620.97 L984.80,620.96 L986.58,620.95 L988.37,620.95 L990.15,620.94 L991.93,620.93 L993.72,620.92 L995.50,620.91 L997.29,620.91 L999.07,620.90 L1000.86,620.89 L1002.64,620.89 L1004.43,620.88 L1006.21,620.87 L1008.00,620.87 L1009.78,620.86 L1011.57,620.85 L1013.35,620.84 L1015.14,620.84 L1016.92,620.83 L1018.71,620.82 L1020.49,620.82 L1022.28,620.81 L1024.06,620.80 L1025.85,620.79 L1027.63,620.78 L1029.42,620.78 L1031.20,620.77 L1032.99,620.76 L1034.77,620.75 L1036.56,620.74 L1038.34,620.73 L1040.13,620.72 L1041.91,620.71 L1043.69,620.70 L1045.48,620.69 L1047.26,620.68 L1049.05,620.67 L1050.83,620.66 L1052.62,620.65 L1054.40,620.64 L1056.19,620.63 L1057.97,620.61 L1059.76,620.60 L1061.54,620.59 L1063.33,620.57 L1065.11,620.56 L1066.90,620.55 L1068.68,620.53 L1070.47,620.52 L1072.25,620.50 L1074.04,620.49 L1075.82,620.47 L1077.61,620.45 L1079.39,620.44 L1081.18,620.42 L1082.96,620.40 L1084.75,620.38 L1086.53,620.36 L1088.32,620.34 L1090.10,620.32 L1091.89,620.30 L1093.67,620.28 L1095.45,620.26 L1097.24,620.23 L1099.02,620.21 L1100.81,620.18 L1102.59,620.16 L1104.38,620.13 L1106.16,620.10 L1107.95,620.08 L1109.73,620.05 L1111.52,620.02 L1113.30,619.98 L1115.09,619.95 L1116.87,619.92 L1118.66,619.88 L1120.44,619.84 L1122.23,619.80 L1124.01,619.76 L1125.80,619.72 L1127.58,619.68 L1129.37,619.64 L1131.15,619.59 L1132.94,619.54 L1134.72,619.49 L1136.51,619.44 L1138.29,619.38 L1140.08,619.32 L1141.86,619.26 L1143.64,619.20 L1145.43,619.13 L1147.21,619.06 L1149.00,618.99 L1150.78,618.91 L1152.57,618.83 L1154.35,618.75 L1156.14,618.66 L1157.92,618.57 L1159.71,618.47 L1161.49,618.37 L1163.28,618.26 L1165.06,618.14 L1166.85,618.02 L1168.63,617.90 L1170.42,617.76 L1172.20,617.62 L1173.99,617.47 L1175.77,617.31 L1177.56,617.13 L1179.34,616.95 L1181.13,616.76 L1182.91,616.56 L1184.70,616.34 L1186.48,616.10 L1188.27,615.85 L1190.05,615.59 L1191.84,615.30 L1193.62,615.00 L1195.40,614.67 L1197.19,614.32 L1198.97,613.94 L1200.76,613.53 L1202.54,613.09 L1204.33,612.61 L1206.11,612.10 L1207.90,611.55 L1209.68,610.95 L1211.47,610.30 L1213.25,609.60 L1215.04,608.83 L1216.82,608.01 L1218.61,607.12 L1220.39,606.15 L1222.18,605.10 L1223.96,603.97 L1225.75,602.76 L1227.53,601.45 L1229.32,600.06 L1231.10,598.58 L1232.89,597.02 L1234.67,595.39 L1236.46,593.71 L1238.24,592.00 L1240.03,590.30 L1241.81,588.65 L1243.59,587.10 L1245.38,585.69 L1247.16,584.49 L1248.95,583.56 L1250.73,582.93 L1252.52,582.64 L1254.30,582.78 L1256.09,583.58 L1257.87,584.98 L1259.66,586.85 L1261.44,589.03 L1263.23,591.37 L1265.01,593.76 L1266.80,596.10 L1268.58,598.32 L1270.37,600.39 L1272.15,602.29 L1273.94,604.01 L1275.72,605.56 L1277.51,606.96 L1279.29,608.21 L1281.08,609.32 L1282.86,610.32 L1284.65,611.21 L1286.43,612.01 L1288.22,612.73 L1290.00,613.37 L1291.79,613.95 L1293.57,614.47 L1295.35,614.94 L1297.14,615.37 L1298.92,615.76 L1300.71,616.11 L1302.49,616.43 L1304.28,616.73 L1306.06,617.00 L1307.85,617.24 L1309.63,617.47 L1311.42,617.68 L1312.90,617.84" fill="none" stroke="#e81a1a" stroke-width="1.2"/>
<path d="M1000.86,620.89 L1002.64,620.89 L1004.43,620.88 L1006.21,620.87 L1008.00,620.87 L1009.78,620.86 L1011.57,620.85 L1013.35,620.84 L1015.14,620.84 L1016.92,620.83 L1018.71,620.82 L1020.49,620.82 L1022.28,620.81 L1024.06,620.80 L1025.85,620.79 L1027.63,620.78 L1029.42,620.78 L1031.20,620.77 L1032.99,620.76 L1034.77,620.75 L1036.56,620.74 L1038.34,620.73 L1040.13,620.72 L1041.91,620.71 L1043.69,620.70 L1045.48,620.69 L1047.26,620.68 L1049.05,620.67 L1050.83,620.66 L1052.62,620.65 L1054.40,620.64 L1056.19,620.63 L1057.97,620.61 L1059.76,620.60 L1061.54,620.59 L1063.33,620.57 L1065.11,620.56 L1066.90,620.55 L1068.68,620.53 L1070.47,620.52 L1072.25,620.50 L1074.04,620.49 L1075.82,620.47 L1077.61,620.45 L1079.39,620.44 L1081.18,620.42 L1082.96,620.40 L1084.75,620.38 L1086.53,620.36 L1088.32,620.34 L1090.10,620.32 L1091.89,620.30 L1093.67,620.28 L1095.45,620.26 L1097.24,620.23 L1099.02,620.21 L1100.81,620.18 L1102.59,620.16 L1104.38,620.13 L1106.16,620.10 L1107.95,620.08 L1109.73,620.05 L1111.52,620.02 L1113.30,619.98 L1115.09,619.95 L1116.87,619.92 L1118.66,619.88 L1120.44,619.84 L1122.23,619.80 L1124.01,619.76 L1125.80,619.72 L1127.58,619.68 L1129.37,619.64 L1131.15,619.59 L1132.94,619.54 L1134.72,619.49 L1136.51,619.44 L1138.29,619.38 L1140.08,619.32 L1141.86,619.26 L1143.64,619.20 L1145.43,619.13 L1147.21,619.06 L1149.00,618.99 L1150.78,618.91 L1152.57,618.83 L1154.35,618.75 L1156.14,618.66 L1157.92,618.57 L1159.71,618.47 L1161.49,618.37 L1163.28,618.26 L1165.06,618.14 L1166.85,618.02 L1168.63,617.90 L1170.42,617.76 L1172.20,617.62 L1173.99,617.47 L1175.77,617.31 L1177.56,617.13 L1179.34,616.95 L1181.13,616.76 L1182.91,616.56 L1184.70,616.34 L1186.48,616.10 L1188.27,615.85 L1190.05,615.59 L1191.84,615.30 L1193.62,615.00 L1195.40,614.67 L1197.19,614.32 L1198.97,613.94 L1200.76,613.53 L1202.54,613.09 L1204.33,612.61 L1206.11,612.10 L1207.90,611.55 L1209.68,610.95 L1211.47,610.30 L1213.25,609.60 L1215.04,608.83 L1216.82,608.01 L1218.61,607.12 L1220.39,606.15 L1222.18,605.10 L1223.96,603.97 L1225.75,602.76 L1227.53,601.45 L1229.32,600.06 L1231.10,598.58 L1232.89,597.02 L1234.67,595.39 L1236.46,593.71 L1238.24,592.00 L1240.03,590.30 L1241.81,588.65 L1243.59,587.10 L1245.38,585.69 L1247.16,584.49 L1248.95,583.56 L1250.73,582.93 L1252.52,582.64 L1254.30,582.78 L1256.09,583.58 L1257.87,584.98 L1259.66,586.85 L1261.44,589.03 L1263.23,591.37 L1265.01,593.76 L1266.80,596.10 L1268.58,598.32 L1270.37,600.39 L1272.15,602.29 L1273.94,604.01 L1275.72,605.56 L1277.51,606.96 L1279.29,608.21 L1281.08,609.32 L1282.86,610.32 L1284.65,611.21 L1286.43,612.01 L1288.22,612.73 L1290.00,613.37 L1291.79,613.95 L1293.57,614.47 L1295.35,614.94 L1297.14,615.37 L1298.92,615.76 L1300.71,616.11 L1302.49,616.43 L1304.28,616.73 L1306.06,617.00 L1307.85,617.24 L1309.63,617.47 L1311.42,617.68 L1312.90,617.84" fill="none" stroke="#e0103a" stroke-width="1.2"/>
<line x1="690.3" y1="689.6" x2="1312.9" y2="689.6" stroke="#e81a1a" stroke-width="1.2"/>
<line x1="1312.9" y1="621.3" x2="1312.9" y2="689.6" stroke="#c3321f" stroke-width="1"/>
<circle cx="740.5" cy="621.2" r="8.3" fill="none" stroke="#e8a020" stroke-width="1.2"/>
<text x="740.5" y="624.0" font-family="Liberation Sans" font-size="7.5" font-weight="bold" fill="#e8a020" text-anchor="middle" letter-spacing="-0.4">HP</text>
<circle cx="1250.5" cy="570.5" r="8" fill="none" stroke="#7a1a9a" stroke-width="1.1"/>
<circle cx="1253.7" cy="572.8" r="8.3" fill="none" stroke="#e0183a" stroke-width="1.2"/>
<text x="1253.7" y="575.5999999999999" font-family="Liberation Sans" font-size="7.5" font-weight="bold" fill="#e0183a" text-anchor="middle" letter-spacing="-0.4">OV</text>
<circle cx="1155.6" cy="632.9" r="8.3" fill="none" stroke="#e8d020" stroke-width="1.2"/>
<text x="1155.6" y="635.6999999999999" font-family="Liberation Sans" font-size="7.5" font-weight="bold" fill="#e8d020" text-anchor="middle" letter-spacing="-0.4">F1</text>
<circle cx="1224.6" cy="632.9" r="8.3" fill="none" stroke="#e8d020" stroke-width="1.2"/>
<text x="1224.6" y="635.6999999999999" font-family="Liberation Sans" font-size="7.5" font-weight="bold" fill="#e8d020" text-anchor="middle" letter-spacing="-0.4">F2</text>
<circle cx="1286.9" cy="609.9" r="8.3" fill="none" stroke="#e8d020" stroke-width="1.2"/>
<text x="1286.9" y="612.6999999999999" font-family="Liberation Sans" font-size="7.5" font-weight="bold" fill="#e8d020" text-anchor="middle" letter-spacing="-0.4">F3</text>
</svg>
<div class="t" style="left:670px;top:550.9px;font-size:5.8px;color:#e8e8e8;width:17px;text-align:right">18</div>
<div class="t" style="left:670px;top:573.4333333333334px;font-size:5.8px;color:#e8e8e8;width:17px;text-align:right">12</div>
<div class="t" style="left:670px;top:595.9666666666667px;font-size:5.8px;color:#e8e8e8;width:17px;text-align:right">6</div>
<div class="t" style="left:670px;top:618.5px;font-size:5.8px;color:#e8e8e8;width:17px;text-align:right">0</div>
<div class="t" style="left:670px;top:641.0333333333333px;font-size:5.8px;color:#e8e8e8;width:17px;text-align:right">-6</div>
<div class="t" style="left:670px;top:663.5666666666666px;font-size:5.8px;color:#e8e8e8;width:17px;text-align:right">-12</div>
<div class="t" style="left:670px;top:686.1px;font-size:5.8px;color:#e8e8e8;width:17px;text-align:right">-18</div>
<div class="t" style="left:675.3px;top:693.5px;font-size:5.8px;color:#e8e8e8;width:30px;text-align:center">20</div>
<div class="t" style="left:757.8858164664035px;top:693.5px;font-size:5.8px;color:#e8e8e8;width:30px;text-align:center">50</div>
<div class="t" style="left:820.3595748998684px;top:693.5px;font-size:5.8px;color:#e8e8e8;width:30px;text-align:center">100</div>
<div class="t" style="left:882.8333333333333px;top:693.5px;font-size:5.8px;color:#e8e8e8;width:30px;text-align:center">200</div>
<div class="t" style="left:965.4191497997369px;top:693.5px;font-size:5.8px;color:#e8e8e8;width:30px;text-align:center">500</div>
<div class="t" style="left:1027.8929082332018px;top:693.5px;font-size:5.8px;color:#e8e8e8;width:30px;text-align:center">1k</div>
<div class="t" style="left:1090.3666666666666px;top:693.5px;font-size:5.8px;color:#e8e8e8;width:30px;text-align:center">2k</div>
<div class="t" style="left:1172.95248313307px;top:693.5px;font-size:5.8px;color:#e8e8e8;width:30px;text-align:center">5k</div>
<div class="t" style="left:1235.426241566535px;top:693.5px;font-size:5.8px;color:#e8e8e8;width:30px;text-align:center">10k</div>
<div class="t" style="left:1297.9px;top:693.5px;font-size:5.8px;color:#e8e8e8;width:30px;text-align:center">20k</div>
<div class="a" style="left:680px;top:708px;width:59px;height:17.5px;background:#2e2e2e;border:2px solid #e8e41c;border-radius:9px"></div>
<div class="t" style="left:680px;top:712.9px;font-size:8.6px;color:#e8e41c;width:59px;text-align:center;-webkit-text-stroke-width:0.45px;letter-spacing:0px">FIR1</div>
<div class="a" style="left:762.8px;top:708px;width:59px;height:17.5px;background:#2e2e2e;border:2px solid #e8e41c;border-radius:9px"></div>
<div class="t" style="left:762.8px;top:712.9px;font-size:8.6px;color:#e8e41c;width:59px;text-align:center;-webkit-text-stroke-width:0.45px;letter-spacing:0px">FIR2</div>
<div class="a" style="left:845.6px;top:708px;width:59px;height:17.5px;background:#2e2e2e;border:2px solid #e8e41c;border-radius:9px"></div>
<div class="t" style="left:845.6px;top:712.9px;font-size:8.6px;color:#e8e41c;width:59px;text-align:center;-webkit-text-stroke-width:0.45px;letter-spacing:0px">FIR3</div>
<div class="a" style="left:928.4px;top:708px;width:59px;height:17.5px;background:#2e2e2e;border:2px solid #7a1a8a;border-radius:9px"></div>
<div class="t" style="left:928.4px;top:712.9px;font-size:8.6px;color:#5e1a6c;width:59px;text-align:center;-webkit-text-stroke-width:0.45px;letter-spacing:0px">PRESET</div>
<div class="a" style="left:1010.8px;top:708px;width:59px;height:17.5px;background:#2e2e2e;border:2px solid #e8a020;border-radius:9px"></div>
<div class="t" style="left:1010.8px;top:712.9px;font-size:8.6px;color:#e8a020;width:59px;text-align:center;-webkit-text-stroke-width:0.45px;letter-spacing:0px">HP</div>
<div class="a" style="left:1093.9px;top:708px;width:59px;height:17.5px;background:#2e2e2e;border:2px solid #5a5a5e;border-radius:9px"></div>
<div class="t" style="left:1093.9px;top:712.9px;font-size:8.6px;color:#5e5e62;width:59px;text-align:center;-webkit-text-stroke-width:0.45px;letter-spacing:0px">EQ</div>
<div class="a" style="left:1176.4px;top:708px;width:59px;height:17.5px;background:#2e2e2e;border:2px solid #e01818;border-radius:9px"></div>
<div class="t" style="left:1176.4px;top:712.9px;font-size:8.6px;color:#e01818;width:59px;text-align:center;-webkit-text-stroke-width:0.45px;letter-spacing:0px">OVERALL</div>
<div class="a" style="left:1259px;top:708px;width:59px;height:17.5px;background:#2e2e2e;border:2px solid #5a5a5e;border-radius:9px"></div>
<div class="t" style="left:1259px;top:712.9px;font-size:8.6px;color:#7a7a7e;width:59px;text-align:center;-webkit-text-stroke-width:0.45px;letter-spacing:0px">Phase</div>
<div class="t" style="left:3px;top:740px;font-size:7.8px;color:#f4f4f4;letter-spacing:-0.3px;z-index:3;-webkit-text-stroke-width:0.4px">Ready.</div>
<div class="t" style="left:932px;top:740px;font-size:7.8px;color:#f0f0f0;letter-spacing:-0.3px;z-index:3">147.8, 0.0, 70.3</div>
<div class="t" style="left:1197px;top:740px;font-size:7.8px;color:#f0f0f0;letter-spacing:-0.3px;z-index:3">MKS</div><!--/BOT-->
</body></html>
